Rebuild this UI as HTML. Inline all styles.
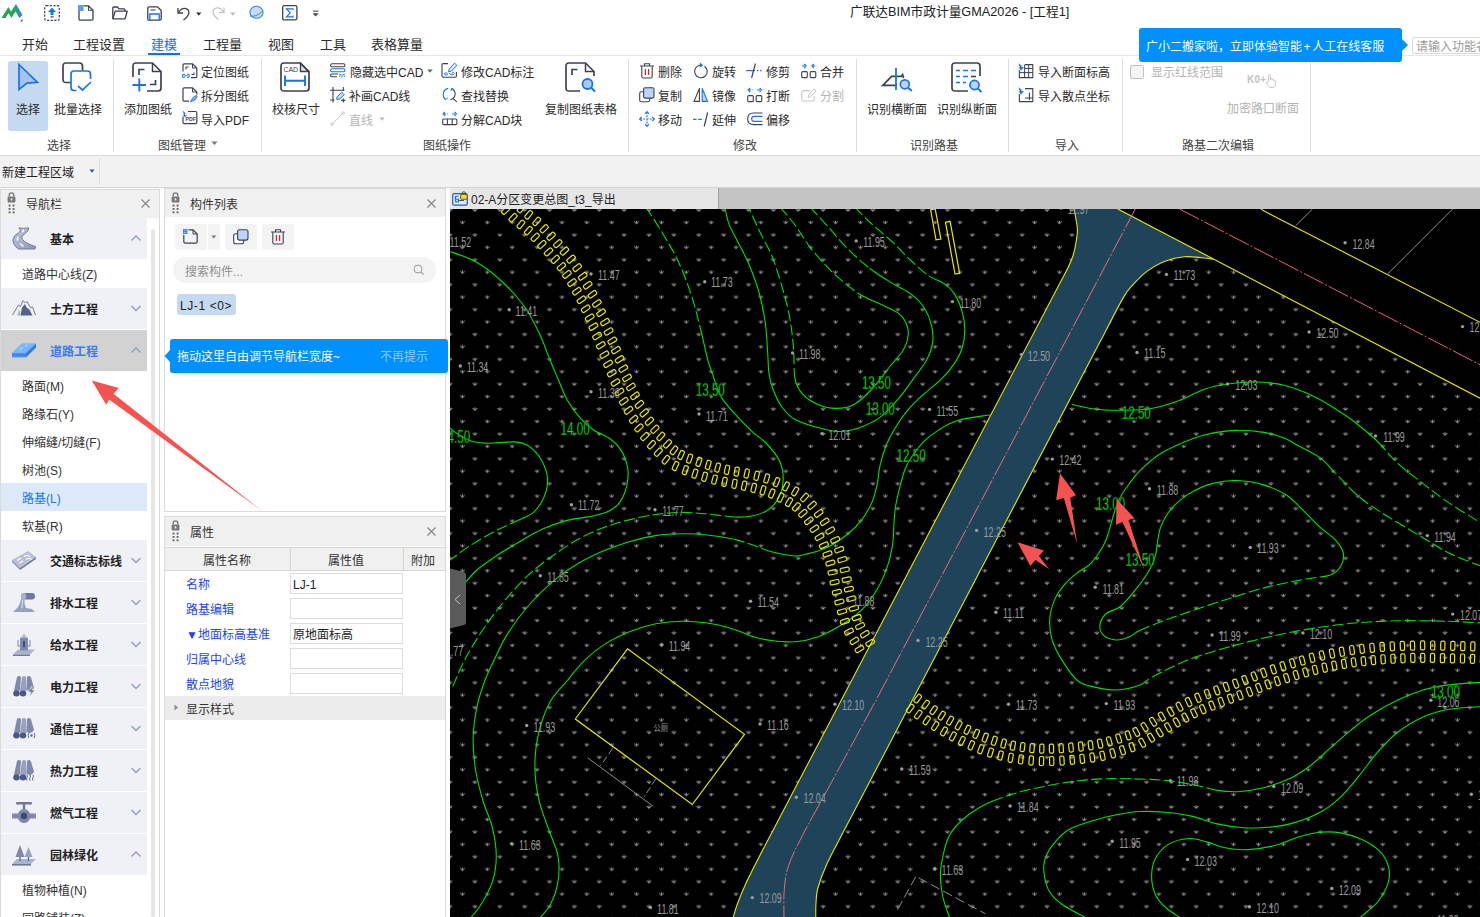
<!DOCTYPE html>
<html lang="zh-CN">
<head>
<meta charset="utf-8">
<title>广联达BIM市政计量GMA2026 - [工程1]</title>
<style>
*{box-sizing:border-box;margin:0;padding:0}
html,body{width:1480px;height:917px;overflow:hidden;background:#fff}
body{font-family:"Liberation Sans","Noto Sans CJK SC",sans-serif;font-size:12px;color:#333;position:relative}
.abs{position:absolute}
.t{position:absolute;white-space:nowrap;line-height:1;margin-top:1px}
.tab,.gl,#title{margin-top:0}
svg{position:absolute;overflow:visible}
#titlebar{left:0;top:0;width:1480px;height:30px;background:#fff}
#title{left:850px;top:6px;font-size:12.7px;color:#222}
.tab{font-size:13px;color:#2b2b2b;top:38px}
.tab.on{color:#1a6fe0}
#ribbon{left:0;top:55px;width:1480px;height:101px;background:#fff;border-top:1px solid #e6e6e6;border-bottom:1px solid #dcdcdc}
.rb{font-size:12px;color:#2b2b2b;margin-top:2px}
.rb.dis{color:#b4b4b4}
.gl{font-size:12px;color:#444;top:140px}
.sep{position:absolute;top:59px;width:1px;height:93px;background:#dcdcdc}
#subbar{left:0;top:156px;width:1480px;height:31px;background:#f2f2f2}
#subline{left:0;top:187px;width:1480px;height:1px;background:#d4d4d4}
</style>
</head>
<body>

<!-- TITLE BAR -->
<div id="titlebar" class="abs"></div>
<div id="title" class="t">广联达BIM市政计量GMA2026 - [工程1]</div>

<!-- logo -->
<svg style="left:1px;top:3px" width="23" height="20" viewBox="0 0 23 20">
<defs><linearGradient id="lg" x1="0" x2="1" y1="0" y2="0"><stop offset="0" stop-color="#1f9c45"/><stop offset=".6" stop-color="#2aa84f"/><stop offset="1" stop-color="#3b7cf0"/></linearGradient></defs>
<path d="M0.5 15 L7.5 4 L10 8.5 L15 1 L21.5 12 L18.5 15 L14.5 8.5 L10.5 15 L7.5 10 L4.5 15 Z" fill="url(#lg)"/>
<path d="M21.5 16 L21.5 18.5 L19 18.5 Z" fill="#444"/>
</svg>
<!-- upload -->
<svg style="left:44px;top:5px" width="16" height="16" viewBox="0 0 16 16" fill="none">
<rect x="0.7" y="0.7" width="14.6" height="14.6" rx="1.5" stroke="#3b4252" stroke-width="1.2" stroke-dasharray="2.2 1.4"/>
<path d="M8 2.5 L12 7 L9.5 7 L9.5 10 L6.5 10 L6.5 7 L4 7 Z" fill="#1a73e8"/><rect x="6.5" y="11.3" width="3" height="1.2" fill="#3b4252"/>
</svg>
<!-- new -->
<svg style="left:78px;top:5px" width="16" height="16" viewBox="0 0 16 16" fill="none">
<path d="M6 0.8 L10.5 0.8 L15 5.2 L15 13.8 Q15 15.2 13.6 15.2 L2.4 15.2 Q1 15.2 1 13.8 L1 6" stroke="#3b4252" stroke-width="1.3"/>
<path d="M10.5 0.8 L10.5 5.2 L15 5.2" stroke="#3b4252" stroke-width="1.1"/>
<path d="M0 1 L5 1 M0 3 L5 3 M0 5 L5 5 M1 0 L1 6 M3 0 L3 6 M5 0 L5 6" stroke="#1a73e8" stroke-width=".9"/>
</svg>
<!-- open -->
<svg style="left:112px;top:6px" width="16" height="14" viewBox="0 0 16 14" fill="none">
<path d="M0.8 12.5 L0.8 2 Q0.8 1 1.8 1 L5.5 1 L7 2.8 L12 2.8 Q13 2.8 13 3.8 L13 5" stroke="#3b4252" stroke-width="1.3"/>
<path d="M0.8 12.8 L3.2 5.2 L15.2 5.2 L13 12.8 Z" stroke="#3b4252" stroke-width="1.3" stroke-linejoin="round"/>
</svg>
<!-- save -->
<svg style="left:147px;top:6px" width="15" height="15" viewBox="0 0 15 15" fill="none">
<path d="M2 0.8 L10.5 0.8 L14.2 4.5 L14.2 12.8 Q14.2 14.2 12.8 14.2 L2.2 14.2 Q0.8 14.2 0.8 12.8 L0.8 2 Q0.8 0.8 2 0.8 Z" stroke="#3b4252" stroke-width="1.3"/>
<path d="M3.5 4 L8.5 4" stroke="#3b4252" stroke-width="1.1"/>
<path d="M2.8 14 L2.8 8 L12.2 8 L12.2 14" stroke="#1a73e8" stroke-width="1.3"/>
</svg>
<!-- undo -->
<svg style="left:177px;top:6px" width="26" height="16" viewBox="0 0 26 16" fill="none">
<path d="M1 2 L1 7 L6 7" stroke="#3b4252" stroke-width="1.3"/>
<path d="M1.3 6.8 Q4.5 1.5 9 2.6 Q13 4 11.5 8.5 Q10.5 11 6.5 14" stroke="#3b4252" stroke-width="1.3"/>
<path d="M19 6.5 L24.4 6.5 L21.7 9.8 Z" fill="#333"/>
</svg>
<!-- redo -->
<svg style="left:212px;top:6px" width="26" height="16" viewBox="0 0 26 16" fill="none">
<path d="M12 1.5 L12 6.5 L7 6.5" stroke="#c4c4c4" stroke-width="1.3"/>
<path d="M11.7 6.3 Q8.5 1 4 2.1 Q0 3.5 1.5 8 Q2.5 10.5 6.5 13.5" stroke="#c4c4c4" stroke-width="1.3"/>
<path d="M18 6.5 L23.4 6.5 L20.7 9.8 Z" fill="#bdbdbd"/>
</svg>
<!-- planet -->
<svg style="left:249px;top:5px" width="15" height="15" viewBox="0 0 15 15" fill="none">
<ellipse cx="7.5" cy="7.3" rx="6.6" ry="6" fill="#c9dcf7" stroke="#3b82f0" stroke-width="1.1"/>
<path d="M1 11 Q7 12.5 13.6 6" stroke="#3b82f0" stroke-width="1"/>
</svg>
<!-- sigma -->
<svg style="left:282px;top:5px" width="16" height="16" viewBox="0 0 16 16" fill="none">
<rect x="0.7" y="0.7" width="14.2" height="14.2" rx="1.5" stroke="#3b4252" stroke-width="1.3"/>
<path d="M11 5 L11 3.8 L4.5 3.8 L8.2 7.8 L4.5 11.8 L11 11.8 L11 10.6" stroke="#1a73e8" stroke-width="1.2"/>
</svg>
<!-- customize -->
<svg style="left:312px;top:10px" width="8" height="8" viewBox="0 0 8 8"><rect x="0.8" y="0.6" width="5.6" height="1" fill="#444"/><path d="M0.6 3.2 L6.6 3.2 L3.6 6.6 Z" fill="#444"/></svg>
<!-- TABS -->
<div class="t tab" style="left:22px">开始</div>
<div class="t tab" style="left:73px">工程设置</div>
<div class="t tab on" style="left:151px">建模</div>
<div class="abs" style="left:148px;top:53px;width:32px;height:2px;background:#1a6fe0"></div>
<div class="t tab" style="left:203px">工程量</div>
<div class="t tab" style="left:268px">视图</div>
<div class="t tab" style="left:320px">工具</div>
<div class="t tab" style="left:371px">表格算量</div>
<!-- RIBBON -->
<div id="ribbon" class="abs"></div>
<div class="abs" style="left:8px;top:61px;width:40px;height:70px;background:#c5d9f1;border-radius:3px"></div>
<!-- select arrow -->
<svg style="left:16px;top:62px" width="24" height="30" viewBox="0 0 24 30"><path d="M3 2.5 L21.5 20.3 L11 21.2 L3 27.5 Z" fill="#a3c4ee" stroke="#1a73e8" stroke-width="1.7" stroke-linejoin="miter"/></svg>
<div class="t rb" style="left:16px;top:102px">选择</div>
<!-- batch select -->
<svg style="left:62px;top:62px" width="30" height="30" viewBox="0 0 30 30" fill="none">
<path d="M8.5 20.5 L4 20.5 Q1 20.5 1 17.5 L1 4 Q1 1 4 1 L17.5 1 Q20.5 1 20.5 4 L20.5 8.5" stroke="#3b4252" stroke-width="1.7"/>
<path d="M14.5 28.5 L12 28.5 Q9 28.5 9 25.5 L9 12 Q9 9 12 9 L25.5 9 Q28.5 9 28.5 12 L28.5 17" stroke="#1a73e8" stroke-width="1.7"/>
<path d="M16 24 L20.5 28 L29 20" stroke="#1a73e8" stroke-width="1.7"/>
</svg>
<div class="t rb" style="left:54px;top:102px">批量选择</div>
<div class="t gl" style="left:47px">选择</div>
<div class="sep" style="left:113px"></div>
<!-- add drawing -->
<svg style="left:132px;top:62px" width="30" height="30" viewBox="0 0 30 30" fill="none">
<path d="M1 15 L1 4 Q1 1 4 1 L20.5 1 L29 9.5 L29 26 Q29 29 26 29 L15 29" stroke="#3b4252" stroke-width="1.7"/>
<path d="M20.5 1.5 L20.5 9.5 L28.5 9.5" stroke="#3b4252" stroke-width="1.5"/>
<path d="M7 13 L7 7.5 L12.5 7.5 M18 22.5 L23.5 22.5 L23.5 18" stroke="#3b4252" stroke-width="1.7"/>
<path d="M7.3 16.5 L7.3 29.5 M0.5 23 L14 23" stroke="#1a73e8" stroke-width="1.9"/>
</svg>
<div class="t rb" style="left:124px;top:102px">添加图纸</div>
<!-- locate drawing -->
<svg style="left:182px;top:63px" width="16" height="16" viewBox="0 0 16 16" fill="none">
<path d="M1 8.5 L1 2 Q1 .8 2.2 .8 L10.5 .8 L14.8 5 L14.8 13.5 Q14.8 14.7 13.6 14.7 L9 14.7" stroke="#3b4252" stroke-width="1.2"/>
<path d="M10.5 1 L10.5 5 L14.5 5" stroke="#3b4252" stroke-width="1"/>
<path d="M4 6.5 L4 4 L6.5 4 M9.5 11.5 L12 11.5 L12 9.5" stroke="#3b4252" stroke-width="1.1"/>
<path d="M3 11.2 L1.6 11.2 Q.6 11.2 .6 12.2 L.6 13.3 Q.6 14.3 1.6 14.3 L3 14.3 M5 11.2 L6.2 11.2 Q7.2 11.2 7.2 12.2 L7.2 13.3 Q7.2 14.3 6.2 14.3 L5 14.3 M2.4 12.75 L5.4 12.75" stroke="#1a73e8" stroke-width="1.1"/>
</svg>
<div class="t rb" style="left:201px;top:65px">定位图纸</div>
<!-- split drawing -->
<svg style="left:182px;top:87px" width="16" height="16" viewBox="0 0 16 16" fill="none">
<path d="M7 14.2 L2.2 14.2 Q1 14.2 1 13 L1 2 Q1 .8 2.2 .8 L10.5 .8 L14.8 5 L14.8 7.5" stroke="#3b4252" stroke-width="1.2"/>
<path d="M10.5 1 L10.5 5 L14.5 5" stroke="#3b4252" stroke-width="1"/>
<path d="M8.5 14.8 L11 10.5 L14.5 8.3 L15.2 9.5 L13 13 Z" fill="#8ab4f8" stroke="#1a73e8" stroke-width=".9"/>
</svg>
<div class="t rb" style="left:201px;top:89px">拆分图纸</div>
<!-- import pdf -->
<svg style="left:182px;top:110px" width="16" height="15" viewBox="0 0 16 15" fill="none">
<path d="M6 1.5 L13.6 1.5 Q14.8 1.5 14.8 2.7 L14.8 12.5 Q14.8 13.7 13.6 13.7 L2.2 13.7 Q1 13.7 1 12.5 L1 6.5" stroke="#3b4252" stroke-width="1.2"/>
<path d="M0.5 0.5 L3.3 3 L3 5.2 L5.2 5 L3 7.2 L0.8 5 L2 4.6 Z" fill="#1a73e8"/>
<text x="3.6" y="10.8" font-family="Liberation Sans,sans-serif" font-size="5.2" font-weight="bold" fill="#3b4252">PDF</text>
</svg>
<div class="t rb" style="left:201px;top:113px">导入PDF</div>
<div class="t gl" style="left:158px">图纸管理</div>
<svg style="left:211px;top:141px" width="8" height="5" viewBox="0 0 8 5"><path d="M.5 .5 L6.5 .5 L3.5 4 Z" fill="#777"/></svg>
<div class="sep" style="left:261px"></div>
<!-- check size -->
<svg style="left:280px;top:62px" width="30" height="30" viewBox="0 0 30 30" fill="none">
<path d="M4 1 L20.5 1 L29 9.5 L29 26 Q29 29 26 29 L4 29 Q1 29 1 26 L1 4 Q1 1 4 1 Z" stroke="#3b4252" stroke-width="1.7"/>
<path d="M20.5 1.5 L20.5 9.5 L28.5 9.5 Z" stroke="#3b4252" stroke-width="1.4" fill="#3b4252" fill-opacity=".15"/>
<text x="3.4" y="9.6" font-family="Liberation Sans,sans-serif" font-size="7" fill="#3b4252">CAD</text>
<path d="M5 13.5 L5 24 M25 13.5 L25 24 M5 18.8 L25 18.8" stroke="#1a73e8" stroke-width="1.9"/>
</svg>
<div class="t rb" style="left:272px;top:102px">校核尺寸</div>
<!-- hide CAD -->
<svg style="left:330px;top:63px" width="16" height="15" viewBox="0 0 16 15" fill="none">
<rect x=".6" y=".8" width="14.4" height="3" rx="1.5" stroke="#3b4252" stroke-width="1.1"/>
<rect x=".6" y="5.8" width="14.4" height="3" rx="1.5" stroke="#1a73e8" stroke-width="1.1"/>
<path d="M8 11 L2 11 Q.6 11 .6 12.4 Q.6 13.8 2 13.8 L7 13.8" stroke="#3b4252" stroke-width="1.1"/>
<path d="M9 11 Q12 13.6 15 11 M10 12.5 L9.3 14 M12 13 L12 14.5 M14 12.5 L14.8 14" stroke="#1a73e8" stroke-width=".9"/>
</svg>
<div class="t rb" style="left:350px;top:65px">隐藏选中CAD</div>
<svg style="left:427px;top:69px" width="7" height="5" viewBox="0 0 7 5"><path d="M.3 .6 L5.7 .6 L3 3.8 Z" fill="#666"/></svg>
<!-- draw CAD line -->
<svg style="left:330px;top:87px" width="16" height="16" viewBox="0 0 16 16" fill="none">
<path d="M3 0 L3 15.5 M0 3.3 L14.5 3.3 M13.3 0 L13.3 4 M0 13 L4.5 13 M13.3 11.5 L13.3 15.5 M11.2 13.4 L15.4 13.4" stroke="#3b4252" stroke-width="1.1"/>
<path d="M6.5 12.3 L7.2 9.8 L11.8 5.2 L14.2 7.6 L9.6 12.2 Z" fill="#c9dcf7" stroke="#1a73e8" stroke-width="1"/>
</svg>
<div class="t rb" style="left:349px;top:89px">补画CAD线</div>
<!-- line -->
<svg style="left:330px;top:111px" width="16" height="16" viewBox="0 0 16 16" fill="none">
<path d="M2.6 12.6 L12.6 2.6" stroke="#c0c0c0" stroke-width="1"/><circle cx="2" cy="13.2" r="1.2" stroke="#c0c0c0" stroke-width=".9" fill="#fff"/><circle cx="13.2" cy="2" r="1.2" stroke="#c0c0c0" stroke-width=".9" fill="#fff"/>
</svg>
<div class="t rb dis" style="left:349px;top:113px">直线</div>
<svg style="left:379px;top:117px" width="7" height="5" viewBox="0 0 7 5"><path d="M.3 .6 L5.7 .6 L3 3.8 Z" fill="#bbb"/></svg>
<!-- modify cad mark -->
<svg style="left:441px;top:62px" width="17" height="16" viewBox="0 0 17 16" fill="none">
<path d="M7 1.6 L2.2 1.6 Q1 1.6 1 2.8 L1 14 Q1 15.2 2.2 15.2 L14.2 15.2 Q15.4 15.2 15.4 14 L15.4 10" stroke="#3b4252" stroke-width="1.1"/>
<path d="M7.5 9.8 L8.3 7 L13.5 1.2 L15.8 3.2 L10.6 9 Z" stroke="#1a73e8" stroke-width="1" fill="#e8f0fe"/>
<path d="M3.5 12.6 Q3.2 10.6 5.2 10.8 Q7 11.4 6.2 12.8 Q5 13.6 3.5 12.6 M8 11 Q9.5 13.5 12.8 12.6 Q14 11.6 12.6 10.6 Q11 10.2 10.6 11.6" stroke="#1a73e8" stroke-width=".9"/>
</svg>
<div class="t rb" style="left:461px;top:65px">修改CAD标注</div>
<!-- find replace -->
<svg style="left:442px;top:87px" width="16" height="16" viewBox="0 0 16 16" fill="none">
<path d="M6.2 1.4 Q1 2.6 1.2 8 Q1.5 11 3.5 12.4" stroke="#1a73e8" stroke-width="1.1"/>
<path d="M1.2 10.2 L3.6 12.6 L5.8 11" stroke="#1a73e8" stroke-width="1"/>
<path d="M9.6 1.8 Q13 3 13.2 7 Q13 10 11 11.6" stroke="#3b4252" stroke-width="1.1" />
<path d="M9 4 L9.4 1.6 L12 2.4" stroke="#1a73e8" stroke-width="1"/>
<path d="M11 11.4 L14.8 14.8 M11 11.4 L8.6 12.8" stroke="#3b4252" stroke-width="1.1"/>
</svg>
<div class="t rb" style="left:461px;top:89px">查找替换</div>
<!-- explode CAD block -->
<svg style="left:442px;top:111px" width="16" height="15" viewBox="0 0 16 15" fill="none">
<rect x=".7" y="8" width="14.2" height="5.6" rx="1" stroke="#3b4252" stroke-width="1.1"/>
<path d="M5.4 8 L5.4 13.6 M10.2 8 L10.2 13.6" stroke="#3b4252" stroke-width="1.1"/>
<path d="M1 3 L5.6 3 M3 1 L1 3 L3 5 M10 3 L14.6 3 M12.6 1 L14.6 3 L12.6 5" stroke="#1a73e8" stroke-width="1.1" stroke-dasharray="3 .8"/>
</svg>
<div class="t rb" style="left:461px;top:113px">分解CAD块</div>
<!-- copy drawing table -->
<svg style="left:565px;top:62px" width="32" height="32" viewBox="0 0 32 32" fill="none">
<path d="M15 29 L4 29 Q1 29 1 26 L1 4 Q1 1 4 1 L20.5 1 L29 9.5 L29 14" stroke="#3b4252" stroke-width="1.7"/>
<path d="M20.5 1.5 L20.5 9.5 L28.5 9.5" stroke="#3b4252" stroke-width="1.5"/>
<path d="M7 13 L7 7.5 L12.5 7.5" stroke="#3b4252" stroke-width="1.7"/>
<circle cx="22.5" cy="22" r="5" fill="#a9c8f5" stroke="#1a73e8" stroke-width="1.8"/>
<path d="M26.3 25.8 L30 29.5" stroke="#1a73e8" stroke-width="2"/>
</svg>
<div class="t rb" style="left:545px;top:102px">复制图纸表格</div>
<div class="t gl" style="left:423px">图纸操作</div>
<div class="sep" style="left:628px"></div>
<!-- MODIFY GROUP -->
<!-- delete -->
<svg style="left:640px;top:63px" width="14" height="16" viewBox="0 0 14 16" fill="none">
<path d="M0 3 L14 3 M4.5 2.8 L4.5 .7 L9.5 .7 L9.5 2.8" stroke="#3b4252" stroke-width="1.1"/>
<path d="M1.8 3.2 L1.8 13.6 Q1.8 15 3.2 15 L10.8 15 Q12.2 15 12.2 13.6 L12.2 3.2" stroke="#3b4252" stroke-width="1.1"/>
<path d="M5.4 6 L5.4 12 M8.6 6 L8.6 12" stroke="#e02020" stroke-width="1.2"/>
</svg>
<div class="t rb" style="left:658px;top:65px">删除</div>
<!-- copy -->
<svg style="left:639px;top:87px" width="16" height="16" viewBox="0 0 16 16" fill="none">
<rect x=".7" y="4.8" width="10" height="10" rx="1.6" stroke="#3b4252" stroke-width="1.1" fill="#fff"/>
<rect x="4.6" y=".7" width="10.4" height="10.4" rx="1.6" stroke="#3b4252" stroke-width="1.1" fill="#bcd4f7"/>
</svg>
<div class="t rb" style="left:658px;top:89px">复制</div>
<!-- move -->
<svg style="left:639px;top:111px" width="16" height="16" viewBox="0 0 16 16" fill="none">
<path d="M8 1 L8 15 M1 8 L15 8" stroke="#1a73e8" stroke-width="1.1" stroke-dasharray="2 1.2"/>
<path d="M6 2.8 L8 .6 L10 2.8 M6 13.2 L8 15.4 L10 13.2 M2.8 6 L.6 8 L2.8 10 M13.2 6 L15.4 8 L13.2 10" stroke="#1a73e8" stroke-width="1.1"/>
</svg>
<div class="t rb" style="left:658px;top:113px">移动</div>
<!-- rotate -->
<svg style="left:693px;top:62px" width="16" height="17" viewBox="0 0 16 17" fill="none">
<path d="M11.4 4.2 A6.3 6.3 0 1 1 7.2 3.2" stroke="#3b4252" stroke-width="1.1"/>
<path d="M6.8 .6 L10.2 3.2 L6.8 5.8 Z" fill="#1a73e8"/>
</svg>
<div class="t rb" style="left:712px;top:65px">旋转</div>
<!-- mirror -->
<svg style="left:693px;top:87px" width="16" height="16" viewBox="0 0 16 16" fill="none">
<path d="M6.4 1.5 L6.4 14.4 L1 14.4 Z" stroke="#3b4252" stroke-width="1.1" stroke-linejoin="round"/>
<path d="M9.2 1.5 L9.2 14.4 L14.6 14.4 Z" stroke="#1a73e8" stroke-width="1.1" fill="#bcd4f7" stroke-linejoin="round"/>
</svg>
<div class="t rb" style="left:712px;top:89px">镜像</div>
<!-- extend -->
<svg style="left:693px;top:111px" width="16" height="16" viewBox="0 0 16 16" fill="none">
<path d="M0 8.4 L10.5 8.4" stroke="#1a73e8" stroke-width="1.2" stroke-dasharray="3.6 1.6"/>
<path d="M14.6 1.5 L11.2 15.5" stroke="#3b4252" stroke-width="1.2"/>
</svg>
<div class="t rb" style="left:712px;top:113px">延伸</div>
<!-- trim -->
<svg style="left:746px;top:63px" width="17" height="16" viewBox="0 0 17 16" fill="none">
<path d="M0 7.6 L9 7.6" stroke="#1a73e8" stroke-width="1.2"/><path d="M11 7.6 L16 7.6" stroke="#1a73e8" stroke-width="1.2" stroke-dasharray="1.5 1.5"/>
<path d="M9.4 .5 L5.6 15" stroke="#3b4252" stroke-width="1.2"/>
</svg>
<div class="t rb" style="left:766px;top:65px">修剪</div>
<!-- break -->
<svg style="left:747px;top:87px" width="16" height="16" viewBox="0 0 16 16" fill="none">
<rect x=".7" y="8.6" width="5.6" height="6" rx="1" stroke="#3b4252" stroke-width="1.1"/><rect x="9.2" y="8.6" width="5.6" height="6" rx="1" stroke="#3b4252" stroke-width="1.1"/>
<path d="M1 3 L5.6 3 M3 1 L1 3 L3 5 M10 3 L14.6 3 M12.6 1 L14.6 3 L12.6 5" stroke="#1a73e8" stroke-width="1.1" stroke-dasharray="3 .8"/>
</svg>
<div class="t rb" style="left:766px;top:89px">打断</div>
<!-- offset -->
<svg style="left:747px;top:112px" width="16" height="14" viewBox="0 0 16 14" fill="none">
<path d="M15.5 1 L6.6 1 Q.7 1 .7 6.8 Q.7 12.6 6.6 12.6 L15.5 12.6" stroke="#3b4252" stroke-width="1.1"/>
<path d="M15.5 4.4 L7.4 4.4 Q4.6 4.4 4.6 6.8 Q4.6 9.4 7.4 9.4 L15.5 9.4" stroke="#1a73e8" stroke-width="1.1"/>
</svg>
<div class="t rb" style="left:766px;top:113px">偏移</div>
<!-- merge -->
<svg style="left:801px;top:63px" width="16" height="16" viewBox="0 0 16 16" fill="none">
<rect x=".7" y="8.6" width="5.6" height="6" rx="1" stroke="#3b4252" stroke-width="1.1"/><rect x="9.2" y="8.6" width="5.6" height="6" rx="1" stroke="#3b4252" stroke-width="1.1"/>
<path d="M1 3 L5 3 M3.2 1 L5.2 3 L3.2 5 M11 3 L15 3 M12.8 1 L10.8 3 L12.8 5" stroke="#1a73e8" stroke-width="1.1" stroke-dasharray="3 .8"/>
</svg>
<div class="t rb" style="left:820px;top:65px">合并</div>
<!-- split (disabled) -->
<svg style="left:801px;top:88px" width="16" height="14" viewBox="0 0 16 14" fill="none">
<path d="M9 2.6 L2 2.6 Q.7 2.6 .7 3.9 L.7 11.7 Q.7 13 2 13 L12 13 Q13.3 13 13.3 11.7 L13.3 8" stroke="#c8c8c8" stroke-width="1.1"/>
<path d="M7 9.4 L8 6.6 L13 1 L15 3 L9.6 8.6 Z" stroke="#c8c8c8" stroke-width="1"/>
</svg>
<div class="t rb dis" style="left:820px;top:89px">分割</div>
<div class="t gl" style="left:733px">修改</div>
<div class="sep" style="left:856px"></div>
<!-- identify cross section -->
<svg style="left:881px;top:66px" width="32" height="26" viewBox="0 0 32 26" fill="none">
<path d="M16 19.4 L1.8 19.4 L10.6 10.4 L20.2 10.4 L21.6 8.6 L22.6 12" stroke="#3b4252" stroke-width="1.7" stroke-linejoin="miter"/>
<path d="M15 2 L15 24" stroke="#1a73e8" stroke-width="1.8"/>
<circle cx="23.8" cy="18.3" r="4.5" fill="#bcd4f7" stroke="#1a73e8" stroke-width="1.7"/>
<path d="M27.2 21.8 L30.8 25" stroke="#1a73e8" stroke-width="1.9"/>
</svg>
<div class="t rb" style="left:867px;top:102px">识别横断面</div>
<!-- identify longitudinal section -->
<svg style="left:951px;top:62px" width="32" height="32" viewBox="0 0 32 32" fill="none">
<path d="M17 29 L4 29 Q1 29 1 26 L1 4 Q1 1 4 1 L26 1 Q29 1 29 4 L29 14" stroke="#3b4252" stroke-width="1.7"/>
<path d="M5 8.5 L9 8.5 M12 8.5 L17 8.5 M20 8.5 L25 8.5 M5 14.5 L9 14.5 M12 14.5 L17 14.5 M5 20.5 L9 20.5 M12 20.5 L15 20.5" stroke="#1a73e8" stroke-width="1.6"/>
<path d="M20 14.5 L25 14.5" stroke="#3b4252" stroke-width="1.6"/>
<circle cx="23.5" cy="23" r="4.6" fill="#bcd4f7" stroke="#1a73e8" stroke-width="1.7"/>
<path d="M26.9 26.5 L30.5 30.1" stroke="#1a73e8" stroke-width="1.9"/>
</svg>
<div class="t rb" style="left:937px;top:102px">识别纵断面</div>
<div class="t gl" style="left:910px">识别路基</div>
<div class="sep" style="left:1008px"></div>
<!-- import section elevation -->
<svg style="left:1018px;top:63px" width="16" height="16" viewBox="0 0 16 16" fill="none">
<path d="M7 1.6 L14.8 1.6 L14.8 14.6 L1.4 14.6 L1.4 7" stroke="#3b4252" stroke-width="1.1"/>
<path d="M6.6 5.4 L14.8 5.4 M6.6 1.6 L6.6 14.6 M1.4 9.6 L14.8 9.6 M10.7 1.6 L10.7 14.6" stroke="#3b4252" stroke-width="1"/>
<path d="M.2 .2 L3.6 2.4 L3.4 4.2 L6 4 L3.2 7.4 L.6 4.6 L2 4.2 Z" fill="#1a73e8"/>
</svg>
<div class="t rb" style="left:1038px;top:65px">导入断面标高</div>
<!-- import scatter -->
<svg style="left:1018px;top:87px" width="16" height="16" viewBox="0 0 16 16" fill="none">
<path d="M7 1.6 L14.8 1.6 L14.8 14.6 L1.4 14.6 L1.4 7" stroke="#3b4252" stroke-width="1.1"/>
<path d="M11.4 5.5 L11.4 13 M7 11 L14.8 11" stroke="#3b4252" stroke-width="1.1"/>
<path d="M.2 .2 L3.6 2.4 L3.4 4.2 L6 4 L3.2 7.4 L.6 4.6 L2 4.2 Z" fill="#1a73e8"/>
</svg>
<div class="t rb" style="left:1038px;top:89px">导入散点坐标</div>
<div class="t gl" style="left:1055px">导入</div>
<div class="sep" style="left:1122px"></div>
<!-- checkbox -->
<div class="abs" style="left:1130px;top:65px;width:14px;height:14px;border:1px solid #c4c4c4;border-radius:2px;background:#f4f4f4"></div>
<div class="t rb dis" style="left:1151px;top:65px">显示红线范围</div>
<div class="t" style="left:1247px;top:74px;font-size:10px;font-weight:bold;color:#c2c2c2;letter-spacing:.2px">K0+</div>
<svg style="left:1265px;top:74px" width="12" height="14" viewBox="0 0 12 14" fill="none">
<path d="M3.4 8 L3.4 1.6 Q3.4 .6 4.3 .6 Q5.2 .6 5.2 1.6 L5.2 5.6 L5.2 4.6 Q6.2 4 7 4.8 L7 6 Q7.8 5 8.8 5.8 L8.8 6.8 Q9.8 6 10.6 7 L10.6 10.4 Q10.4 12.6 9 13.4 L4.6 13.4 Q2.4 11.6 1.2 8.8 Q1.6 7.4 3.4 8.6" stroke="#c2c2c2" stroke-width=".9"/>
</svg>
<div class="t rb dis" style="left:1227px;top:101px">加密路口断面</div>
<div class="t gl" style="left:1182px">路基二次编辑</div>
<div class="sep" style="left:1310px"></div>
<!-- tooltip -->
<div class="abs" style="left:1139px;top:28px;width:263px;height:34px;background:#0090ff;border-radius:3px"></div>
<svg style="left:1402px;top:39px" width="7" height="12" viewBox="0 0 7 12"><path d="M0 0 L6 6 L0 12 Z" fill="#0090ff"/></svg>
<div class="t" style="left:1146px;top:40px;font-size:12px;color:#fff">广小二搬家啦，立即体验智能<span style="margin:0 1.6px">+</span>人工在线客服</div>
<div class="abs" style="left:1412px;top:37px;width:80px;height:17px;border:1px solid #dadada;border-radius:2px;background:#fff"></div>
<div class="t" style="left:1416px;top:40px;font-size:12px;color:#9a9a9a">请输入功能名称</div>
<!-- SUBBAR -->
<div id="subbar" class="abs"></div>
<div id="subline" class="abs"></div>
<div class="t" style="left:2px;top:166px;font-size:12px;color:#222">新建工程区域</div>
<svg style="left:89px;top:169px" width="7" height="5" viewBox="0 0 7 5"><path d="M.4 .6 L5.6 .6 L3 3.8 Z" fill="#2c5c8c"/></svg>
<div class="abs" style="left:99px;top:158px;width:1px;height:27px;background:#dedede"></div>
<!-- NAV PANEL -->
<div class="abs" style="left:0;top:188px;width:450px;height:729px;background:#fff"></div>
<div class="abs" style="left:0;top:189px;width:160px;height:729px;background:#fff;border:1px solid #dadada"></div>
<div class="abs" style="left:1px;top:190px;width:158px;height:28px;background:#f0f0f0"></div>
<svg style="left:7px;top:192px" width="9" height="23" viewBox="0 0 9 23" fill="none"><path d="M2.2 4.5 L2.2 3 Q2.2 .8 4.5 .8 Q6.8 .8 6.8 3 L6.8 4.5" stroke="#777" stroke-width="1.3"/><rect x=".6" y="4.4" width="7.8" height="6" rx="1" fill="#777"/><rect x="3.7" y="6.3" width="1.6" height="2.2" fill="#eee"/><g fill="#666"><rect x="1.6" y="12.6" width="1.9" height="1.9"/><rect x="5.6" y="12.6" width="1.9" height="1.9"/><rect x="1.6" y="16" width="1.9" height="1.9"/><rect x="5.6" y="16" width="1.9" height="1.9"/><rect x="1.6" y="19.4" width="1.9" height="1.9"/><rect x="5.6" y="19.4" width="1.9" height="1.9"/></g></svg>
<div class="t" style="left:26px;top:198px;font-size:12px;color:#333">导航栏</div>
<svg style="left:141px;top:199px" width="9" height="9" viewBox="0 0 9 9"><path d="M.5 .5 L8.5 8.5 M8.5 .5 L.5 8.5" stroke="#888" stroke-width="1.2"/></svg>
<div class="abs" style="left:151px;top:229px;width:4px;height:688px;background:#e6e6e6;border-radius:2px"></div>
<div class="abs" style="left:1px;top:218px;width:146px;height:41px;background:#f0f1f6"></div>
<svg style="left:12px;top:227px" width="24" height="24" viewBox="0 0 24 24"><defs><linearGradient id="rdg" x1="0" y1="0" x2="1" y2="1"><stop offset="0" stop-color="#c3cadd"/><stop offset="1" stop-color="#8d98b8"/></linearGradient></defs><path d="M7 .8 Q12 2.2 16.5 .8 Q17.5 3.5 13 6.5 Q8.5 9.5 10.5 12.5 Q13.5 16.5 23.5 19.5 L23 22 L6.5 22 Q.5 17.5 1 12.5 Q1.5 8.5 7 5.5 Q10 3.5 7 .8 Z" fill="url(#rdg)" stroke="#707b9c" stroke-width="1"/><path d="M11.5 3 L10.8 4.6 M5.8 10.6 L5.4 13 M8.5 17 L11 19" stroke="#fff" stroke-width="1.5" stroke-linecap="round"/></svg>
<div class="t" style="left:50px;top:233px;font-size:12px;font-weight:bold;color:#222">基本</div>
<svg style="left:131px;top:235px" width="10" height="7" viewBox="0 0 10 7" fill="none"><path d="M.5 5.5 L5 1 L9.5 5.5" stroke="#8d9bc5" stroke-width="1.3"/></svg>
<div class="t" style="left:22px;top:268px;font-size:12px;color:#333">道路中心线(Z)</div>
<div class="abs" style="left:1px;top:288px;width:146px;height:41px;background:#f0f1f6"></div>
<svg style="left:12px;top:297px" width="24" height="24" viewBox="0 0 24 24"><path d="M.5 18 L6.5 8 L8.5 9.5 L11 3.5 L13.5 6 L15 4.5 L18.5 10.5 L20.5 10 L23.5 18" stroke="#6f7a99" stroke-width="1" fill="none" stroke-linejoin="round"/><path d="M8.5 18.5 L10 10.5 L13 7 L14.5 10.5 L17.5 12.5 L20.5 18.5 Z" fill="#55628c"/><path d="M5 18.5 L7.5 12 L8.8 18.5 Z" fill="#aab3cc"/></svg>
<div class="t" style="left:50px;top:303px;font-size:12px;font-weight:bold;color:#222">土方工程</div>
<svg style="left:131px;top:305px" width="10" height="7" viewBox="0 0 10 7" fill="none"><path d="M.5 1 L5 5.5 L9.5 1" stroke="#8d9bc5" stroke-width="1.3"/></svg>
<div class="abs" style="left:1px;top:330px;width:146px;height:41px;background:#d2d2d2"></div>
<svg style="left:12px;top:339px" width="24" height="24" viewBox="0 0 24 24"><path d="M0 13.8 L10 4.2 L24 4.2 L14 13.8 Z" fill="#7ab5f8"/><path d="M0 13.8 L14 13.8 L14 18.4 L0 18.4 Z" fill="#4a93f5"/><path d="M14 13.8 L24 4.2 L24 8.8 L14 18.4 Z" fill="#3a7fe6"/><path d="M0 16 L14 16 L24 6.4" stroke="#2f6fd8" stroke-width=".7" fill="none"/><path d="M7.5 11 L10.5 8.6 M13 7.4 L15.5 5.6" stroke="#d6e8ff" stroke-width="1"/></svg>
<div class="t" style="left:50px;top:345px;font-size:12px;font-weight:bold;color:#3b7de8">道路工程</div>
<svg style="left:131px;top:347px" width="10" height="7" viewBox="0 0 10 7" fill="none"><path d="M.5 5.5 L5 1 L9.5 5.5" stroke="#8d9bc5" stroke-width="1.3"/></svg>
<div class="t" style="left:22px;top:380px;font-size:12px;color:#333">路面(M)</div>
<div class="t" style="left:22px;top:408px;font-size:12px;color:#333">路缘石(Y)</div>
<div class="t" style="left:22px;top:436px;font-size:12px;color:#333">伸缩缝/切缝(F)</div>
<div class="t" style="left:22px;top:464px;font-size:12px;color:#333">树池(S)</div>
<div class="abs" style="left:1px;top:483px;width:146px;height:28px;background:#dce9f9"></div>
<div class="t" style="left:22px;top:492px;font-size:12px;color:#1878f2">路基(L)</div>
<div class="t" style="left:22px;top:520px;font-size:12px;color:#333">软基(R)</div>
<div class="abs" style="left:1px;top:540px;width:146px;height:41px;background:#f0f1f6"></div>
<svg style="left:12px;top:549px" width="24" height="24" viewBox="0 0 24 24"><path d="M0 11 L16 2 L24 8 L8 19 Z" fill="#b8c0d6"/><path d="M0 11 L8 19 L8 21 L0 13 Z" fill="#8893b4"/><path d="M8 19 L24 8 L24 10 L8 21 Z" fill="#6f7a99"/><path d="M5 11.5 L9 9 M7.5 14 L11 11.8 M12 7.5 Q15 5.5 18 7.5 M14 10.5 Q17 8.5 20 10.5" stroke="#fff" stroke-width="1.1" fill="none"/></svg>
<div class="t" style="left:50px;top:555px;font-size:12px;font-weight:bold;color:#222">交通标志标线</div>
<svg style="left:131px;top:557px" width="10" height="7" viewBox="0 0 10 7" fill="none"><path d="M.5 1 L5 5.5 L9.5 1" stroke="#8d9bc5" stroke-width="1.3"/></svg>
<div class="abs" style="left:1px;top:582px;width:146px;height:41px;background:#f0f1f6"></div>
<svg style="left:12px;top:591px" width="24" height="24" viewBox="0 0 24 24"><rect x="9" y="2" width="14" height="6.5" rx="3.2" fill="#6f7a99"/><ellipse cx="11.5" cy="5.2" rx="2.6" ry="3.2" fill="#aab3cc"/><path d="M9 8 Q8 15 3 19 L1 21 L23 21 L20 18 L14 17 Q12 13 12.5 8.5 Z" fill="#98a2c0"/><path d="M10.5 9 L10 17" stroke="#dfe3ef" stroke-width="1"/></svg>
<div class="t" style="left:50px;top:597px;font-size:12px;font-weight:bold;color:#222">排水工程</div>
<svg style="left:131px;top:599px" width="10" height="7" viewBox="0 0 10 7" fill="none"><path d="M.5 1 L5 5.5 L9.5 1" stroke="#8d9bc5" stroke-width="1.3"/></svg>
<div class="abs" style="left:1px;top:624px;width:146px;height:41px;background:#f0f1f6"></div>
<svg style="left:12px;top:633px" width="24" height="24" viewBox="0 0 24 24"><path d="M1 21.5 L6 16.5 L23 16.5 L18 21.5 Z" fill="#aab3cc"/><path d="M1 21.5 L18 21.5 L18 23 L1 23 Z" fill="#6f7a99"/><rect x="8" y="4.5" width="8" height="13" rx="1" fill="#7e89ab"/><path d="M9.5 4.5 L12 .5 L14.5 4.5 Z" fill="#aab3cc"/><rect x="11" y="8" width="2" height="6" fill="#3f4a6e"/><path d="M6 7 L6 13 L8 13 M18 7 L18 13 L16 13" stroke="#98a2c0" stroke-width="1.4" fill="none"/></svg>
<div class="t" style="left:50px;top:639px;font-size:12px;font-weight:bold;color:#222">给水工程</div>
<svg style="left:131px;top:641px" width="10" height="7" viewBox="0 0 10 7" fill="none"><path d="M.5 1 L5 5.5 L9.5 1" stroke="#8d9bc5" stroke-width="1.3"/></svg>
<div class="abs" style="left:1px;top:666px;width:146px;height:41px;background:#f0f1f6"></div>
<svg style="left:12px;top:675px" width="24" height="24" viewBox="0 0 24 24"><path d="M5 2 Q7 0 9 2 L8 15 Q4 20 2 16 Z" fill="#7e89ab"/><path d="M10 2 Q12 0 14 2 L15 15 Q11 20 8 16 Z" fill="#98a2c0"/><path d="M15 2 Q17 0 19 2.5 L22 13 Q19 18 15 15 Z" fill="#7e89ab"/><ellipse cx="4.5" cy="18.5" rx="3.3" ry="3" fill="#4d5880"/><ellipse cx="11" cy="18.5" rx="3.3" ry="3" fill="#4d5880"/><path d="M20 11 L16 17 L19 17 L17 22 L23 15 L20 15 Z" fill="#6f7a99" stroke="#f0f1f6" stroke-width=".6"/></svg>
<div class="t" style="left:50px;top:681px;font-size:12px;font-weight:bold;color:#222">电力工程</div>
<svg style="left:131px;top:683px" width="10" height="7" viewBox="0 0 10 7" fill="none"><path d="M.5 1 L5 5.5 L9.5 1" stroke="#8d9bc5" stroke-width="1.3"/></svg>
<div class="abs" style="left:1px;top:708px;width:146px;height:41px;background:#f0f1f6"></div>
<svg style="left:12px;top:717px" width="24" height="24" viewBox="0 0 24 24"><path d="M5 2 Q7 0 9 2 L8 15 Q4 20 2 16 Z" fill="#7e89ab"/><path d="M10 2 Q12 0 14 2 L15 15 Q11 20 8 16 Z" fill="#98a2c0"/><path d="M15 2 Q17 0 19 2.5 L22 13 Q19 18 15 15 Z" fill="#7e89ab"/><ellipse cx="4.5" cy="18.5" rx="3.3" ry="3" fill="#4d5880"/><ellipse cx="11" cy="18.5" rx="3.3" ry="3" fill="#4d5880"/><circle cx="19.5" cy="18.5" r="1.2" fill="#5a6690"/><path d="M16.8 16 Q15.4 18.5 16.8 21 M22.2 16 Q23.6 18.5 22.2 21" stroke="#5a6690" stroke-width="1" fill="none"/></svg>
<div class="t" style="left:50px;top:723px;font-size:12px;font-weight:bold;color:#222">通信工程</div>
<svg style="left:131px;top:725px" width="10" height="7" viewBox="0 0 10 7" fill="none"><path d="M.5 1 L5 5.5 L9.5 1" stroke="#8d9bc5" stroke-width="1.3"/></svg>
<div class="abs" style="left:1px;top:750px;width:146px;height:41px;background:#f0f1f6"></div>
<svg style="left:12px;top:759px" width="24" height="24" viewBox="0 0 24 24"><path d="M5 2 Q7 0 9 2 L8 15 Q4 20 2 16 Z" fill="#7e89ab"/><path d="M10 2 Q12 0 14 2 L15 15 Q11 20 8 16 Z" fill="#98a2c0"/><path d="M15 2 Q17 0 19 2.5 L22 13 Q19 18 15 15 Z" fill="#7e89ab"/><ellipse cx="4.5" cy="18.5" rx="3.3" ry="3" fill="#4d5880"/><ellipse cx="11" cy="18.5" rx="3.3" ry="3" fill="#4d5880"/><path d="M15 16 Q16 17 15 18.5 Q14 20 15 21.5 M18 16 Q19 17 18 18.5 Q17 20 18 21.5 M21 16 Q22 17 21 18.5 Q20 20 21 21.5" stroke="#5a6690" stroke-width="1" fill="none"/></svg>
<div class="t" style="left:50px;top:765px;font-size:12px;font-weight:bold;color:#222">热力工程</div>
<svg style="left:131px;top:767px" width="10" height="7" viewBox="0 0 10 7" fill="none"><path d="M.5 1 L5 5.5 L9.5 1" stroke="#8d9bc5" stroke-width="1.3"/></svg>
<div class="abs" style="left:1px;top:792px;width:146px;height:41px;background:#f0f1f6"></div>
<svg style="left:12px;top:801px" width="24" height="24" viewBox="0 0 24 24"><rect x="4" y="1" width="16" height="2.4" rx="1" fill="#6f7a99"/><rect x="10.8" y="3" width="2.4" height="5" fill="#6f7a99"/><path d="M0 12.5 L6 12.5 Q8 8 12 8 Q16 8 18 12.5 L24 12.5 L24 17.5 L18 17.5 Q16 22 12 22 Q8 22 6 17.5 L0 17.5 Z" fill="#7e89ab"/><circle cx="12" cy="15" r="3.2" fill="#3f4a6e"/></svg>
<div class="t" style="left:50px;top:807px;font-size:12px;font-weight:bold;color:#222">燃气工程</div>
<svg style="left:131px;top:809px" width="10" height="7" viewBox="0 0 10 7" fill="none"><path d="M.5 1 L5 5.5 L9.5 1" stroke="#8d9bc5" stroke-width="1.3"/></svg>
<div class="abs" style="left:1px;top:834px;width:146px;height:41px;background:#f0f1f6"></div>
<svg style="left:12px;top:843px" width="24" height="24" viewBox="0 0 24 24"><path d="M0 21 L5 16 L24 16 L19 21 Z" fill="#aab3cc"/><path d="M0 21 L19 21 L19 22.6 L0 22.6 Z" fill="#6f7a99"/><path d="M8 2 L12.5 14 L3.5 14 Z" fill="#7e89ab"/><path d="M16.5 4 L20.5 14 L12.5 14 Z" fill="#98a2c0"/><path d="M8 14 L8 18 M16.5 14 L16.5 18" stroke="#5a6690" stroke-width="1.3"/></svg>
<div class="t" style="left:50px;top:849px;font-size:12px;font-weight:bold;color:#222">园林绿化</div>
<svg style="left:131px;top:851px" width="10" height="7" viewBox="0 0 10 7" fill="none"><path d="M.5 5.5 L5 1 L9.5 5.5" stroke="#8d9bc5" stroke-width="1.3"/></svg>
<div class="t" style="left:22px;top:884px;font-size:12px;color:#333">植物种植(N)</div>
<div class="t" style="left:22px;top:912px;font-size:12px;color:#333">园路铺装(Z)</div>
<!-- COMPONENT LIST PANEL -->
<div class="abs" style="left:164px;top:188px;width:282px;height:324px;background:#fff;border:1px solid #dadada"></div>
<div class="abs" style="left:165px;top:189px;width:280px;height:28px;background:#f0f0f0"></div>
<svg style="left:171px;top:192px" width="9" height="23" viewBox="0 0 9 23" fill="none"><path d="M2.2 4.5 L2.2 3 Q2.2 .8 4.5 .8 Q6.8 .8 6.8 3 L6.8 4.5" stroke="#777" stroke-width="1.3"/><rect x=".6" y="4.4" width="7.8" height="6" rx="1" fill="#777"/><rect x="3.7" y="6.3" width="1.6" height="2.2" fill="#eee"/><g fill="#666"><rect x="1.6" y="12.6" width="1.9" height="1.9"/><rect x="5.6" y="12.6" width="1.9" height="1.9"/><rect x="1.6" y="16" width="1.9" height="1.9"/><rect x="5.6" y="16" width="1.9" height="1.9"/><rect x="1.6" y="19.4" width="1.9" height="1.9"/><rect x="5.6" y="19.4" width="1.9" height="1.9"/></g></svg>
<div class="t" style="left:190px;top:198px;font-size:12px;color:#333">构件列表</div>
<svg style="left:427px;top:199px" width="9" height="9" viewBox="0 0 9 9"><path d="M.5 .5 L8.5 8.5 M8.5 .5 L.5 8.5" stroke="#888" stroke-width="1.2"/></svg>
<div class="abs" style="left:175px;top:224px;width:32px;height:26px;background:#f3f3f3;border-radius:3px 0 0 3px"></div>
<div class="abs" style="left:208px;top:224px;width:12px;height:26px;background:#f3f3f3;border-radius:0 3px 3px 0"></div>
<div class="abs" style="left:225px;top:224px;width:32px;height:26px;background:#f3f3f3;border-radius:3px"></div>
<div class="abs" style="left:262px;top:224px;width:32px;height:26px;background:#f3f3f3;border-radius:3px"></div>
<svg style="left:183px;top:229px" width="15" height="15" viewBox="0 0 15 15" fill="none">
<path d="M5.5 .8 L10 .8 L14.2 5 L14.2 12.8 Q14.2 14.2 12.8 14.2 L2.2 14.2 Q.8 14.2 .8 12.8 L.8 6" stroke="#3b4252" stroke-width="1.2"/>
<path d="M10 .8 L10 5 L14.2 5" stroke="#3b4252" stroke-width="1"/>
<path d="M0 .8 L4.4 .8 M0 2.6 L4.4 2.6 M0 4.4 L4.4 4.4 M.6 0 L.6 5 M2.2 0 L2.2 5 M3.8 0 L3.8 5" stroke="#1a73e8" stroke-width=".8"/></svg>
<svg style="left:211px;top:235px" width="6" height="4" viewBox="0 0 6 4"><path d="M.3 .4 L5.3 .4 L2.8 3.4 Z" fill="#777"/></svg>
<svg style="left:233px;top:229px" width="16" height="16" viewBox="0 0 16 16" fill="none">
<rect x=".7" y="4.8" width="10" height="10" rx="2" stroke="#3b4252" stroke-width="1.1" fill="#fff"/>
<rect x="4.6" y=".7" width="10.4" height="10.4" rx="2" stroke="#3b4252" stroke-width="1.1" fill="#bcd4f7"/></svg>
<svg style="left:271px;top:229px" width="14" height="16" viewBox="0 0 14 16" fill="none">
<path d="M0 3 L14 3 M4.5 2.8 L4.5 .7 L9.5 .7 L9.5 2.8" stroke="#3b4252" stroke-width="1.1"/>
<path d="M1.8 3.2 L1.8 13.6 Q1.8 15 3.2 15 L10.8 15 Q12.2 15 12.2 13.6 L12.2 3.2" stroke="#3b4252" stroke-width="1.1"/>
<path d="M5.4 6 L5.4 12 M8.6 6 L8.6 12" stroke="#e02020" stroke-width="1.2"/></svg>
<div class="abs" style="left:173px;top:257px;width:263px;height:26px;background:#f3f3f3;border-radius:13px"></div>
<div class="t" style="left:185px;top:265px;font-size:12px;color:#8f8f8f">搜索构件...</div>
<svg style="left:413px;top:264px" width="12" height="12" viewBox="0 0 12 12" fill="none"><circle cx="5" cy="5" r="4" stroke="#9a9a9a" stroke-width="1"/><path d="M8 8 L10.6 10.6" stroke="#9a9a9a" stroke-width="1.1"/></svg>
<div class="abs" style="left:177px;top:294px;width:59px;height:21px;background:#c5d9f1;border-radius:3px"></div>
<div class="t" style="left:180px;top:299px;font-size:12px;color:#222;letter-spacing:.6px">LJ-1 &lt;0&gt;</div>
<!-- PROPERTIES PANEL -->
<div class="abs" style="left:164px;top:516px;width:282px;height:405px;background:#fff;border:1px solid #dadada"></div>
<div class="abs" style="left:165px;top:517px;width:280px;height:29px;background:#f0f0f0"></div>
<svg style="left:171px;top:520px" width="9" height="23" viewBox="0 0 9 23" fill="none"><path d="M2.2 4.5 L2.2 3 Q2.2 .8 4.5 .8 Q6.8 .8 6.8 3 L6.8 4.5" stroke="#777" stroke-width="1.3"/><rect x=".6" y="4.4" width="7.8" height="6" rx="1" fill="#777"/><rect x="3.7" y="6.3" width="1.6" height="2.2" fill="#eee"/><g fill="#666"><rect x="1.6" y="12.6" width="1.9" height="1.9"/><rect x="5.6" y="12.6" width="1.9" height="1.9"/><rect x="1.6" y="16" width="1.9" height="1.9"/><rect x="5.6" y="16" width="1.9" height="1.9"/><rect x="1.6" y="19.4" width="1.9" height="1.9"/><rect x="5.6" y="19.4" width="1.9" height="1.9"/></g></svg>
<div class="t" style="left:190px;top:526px;font-size:12px;color:#333">属性</div>
<svg style="left:427px;top:527px" width="9" height="9" viewBox="0 0 9 9"><path d="M.5 .5 L8.5 8.5 M8.5 .5 L.5 8.5" stroke="#888" stroke-width="1.2"/></svg>
<div class="abs" style="left:165px;top:547px;width:280px;height:24px;background:#f0f0f0;border-top:1px solid #d4d4d4;border-bottom:1px solid #d4d4d4"></div>
<div class="abs" style="left:290px;top:547px;width:1px;height:24px;background:#d4d4d4"></div>
<div class="abs" style="left:403px;top:547px;width:1px;height:24px;background:#d4d4d4"></div>
<div class="t" style="left:203px;top:554px;font-size:12px;color:#333">属性名称</div>
<div class="t" style="left:328px;top:554px;font-size:12px;color:#333">属性值</div>
<div class="t" style="left:411px;top:554px;font-size:12px;color:#333">附加</div>
<div class="t" style="left:186px;top:578px;font-size:12px;color:#2446ee">名称</div>
<div class="abs" style="left:290px;top:573px;width:113px;height:21px;background:#fff;border:1px solid #dcdcdc"></div>
<div class="t" style="left:293px;top:578px;font-size:12px;color:#222">LJ-1</div>
<div class="t" style="left:186px;top:603px;font-size:12px;color:#2446ee">路基编辑</div>
<div class="abs" style="left:290px;top:598px;width:113px;height:21px;background:#fff;border:1px solid #dcdcdc"></div>
<div class="t" style="left:186px;top:628px;font-size:12px;color:#2446ee">▼地面标高基准</div>
<div class="abs" style="left:290px;top:623px;width:113px;height:21px;background:#fff;border:1px solid #dcdcdc"></div>
<div class="t" style="left:293px;top:628px;font-size:12px;color:#222">原地面标高</div>
<div class="t" style="left:186px;top:653px;font-size:12px;color:#2446ee">归属中心线</div>
<div class="abs" style="left:290px;top:648px;width:113px;height:21px;background:#fff;border:1px solid #dcdcdc"></div>
<div class="t" style="left:186px;top:678px;font-size:12px;color:#2446ee">散点地貌</div>
<div class="abs" style="left:290px;top:673px;width:113px;height:21px;background:#fff;border:1px solid #dcdcdc"></div>
<div class="abs" style="left:165px;top:696px;width:280px;height:24px;background:#ececec"></div>
<svg style="left:174px;top:704px" width="5" height="7" viewBox="0 0 5 7"><path d="M.5 .5 L4 3.5 L.5 6.5 Z" fill="#888"/></svg>
<div class="t" style="left:186px;top:703px;font-size:12px;color:#333">显示样式</div>
<!-- CAD CANVAS -->
<div class="abs" style="left:450px;top:188px;width:1030px;height:21px;background:#c4c4c4"></div>
<div class="abs" style="left:450px;top:188px;width:269px;height:21px;background:#e6e6e6;border-right:1px solid #a0a0a0"></div>
<svg style="left:452px;top:191px" width="16" height="15" viewBox="0 0 16 15" fill="none"><rect x=".7" y="2.6" width="14.6" height="11.6" rx="1.6" fill="#dce9fb" stroke="#2a5fb0" stroke-width="1.2"/><path d="M3.4 5.2 L6.6 5.2 M3.4 5.2 L3.4 8" stroke="#2a5fb0" stroke-width="1.1"/><rect x="3.6" y="8.2" width="3" height="2.6" stroke="#2a5fb0" stroke-width="1"/><path d="M6.6 9.5 L12 9.5" stroke="#2a5fb0" stroke-width="1"/><path d="M10 3.6 L10 2.6 Q10 .8 11.8 .8 Q13.6 .8 13.6 2.6 L13.6 3.6" stroke="#5a4a00" stroke-width="1"/><rect x="8.6" y="3.4" width="6.6" height="4.8" rx=".6" fill="#ffd936" stroke="#5a4a00" stroke-width=".9"/></svg>
<div class="t" style="left:471px;top:193px;font-size:12px;color:#222">02-A分区变更总图_t3_导出</div>
<svg id="cad" style="left:450px;top:209px;overflow:hidden" width="1030" height="708" viewBox="450 209 1030 708">
<defs><pattern id="grass" x="450" y="210" width="24.875" height="24.875" patternUnits="userSpaceOnUse"><path id="gm" d="M-2.3 -1 L0 1.3 L2.3 -1 M0 -1.7 L0 1.3" stroke="#909090" stroke-width="1" fill="none"/><use href="#gm" x="24.875"/><use href="#gm" y="24.875"/><use href="#gm" x="24.875" y="24.875"/><use href="#gm" x="12.44" y="12.44"/></pattern></defs>
<rect x="450" y="209" width="1030" height="708" fill="#000"/>
<rect x="450" y="209" width="1030" height="708" fill="url(#grass)"/>
<path d="M1117.7 209 L1480 398.2 L1480 209 Z" fill="#000"/>
<path d="M1073.8 208C1074.4 211.3 1076.9 222.5 1077.3 227.8C1077.7 233.2 1077.1 235.4 1076.4 240.1C1075.7 244.8 1074.5 251 1072.9 256C1071.3 261 1069.6 264.3 1066.8 270C1064 275.7 1058 286.7 1056.3 290L812.8 754.5C809.3 761.2 799.6 779.6 791.8 794.5C784 809.4 772 832.3 766 843.7C760 855.1 759.5 856.2 756 863C752.5 869.8 748.5 877.7 745.3 884.7C742.1 891.7 739 899.5 737 905C735 910.5 733.7 915.8 733 918L815.8 918C815.8 915.5 815.6 908.1 816 903C816.4 897.9 816.1 894.1 818 887.5C819.9 880.9 823 872.4 827.2 863.2C831.4 854 836.9 844.3 843 832.5C849.1 820.7 860.5 799.2 864 792.5L1102 338.1C1105.5 331.4 1117.8 307.1 1123 298.1C1128.2 289.1 1129.4 288.6 1133.5 284.1C1137.6 279.6 1142.3 274.7 1147.6 270.9C1152.9 267.1 1158.9 263.5 1165.1 261.2C1171.2 258.9 1178.3 257.4 1184.5 256.8C1190.7 256.2 1197.2 257.3 1202 257.7C1206.8 258.1 1211.6 258.9 1213.5 259.2L1117.7 208 Z" fill="#1f4459"/>
<g fill="none" stroke="#e6e600" stroke-width="1.1">
<path d="M1073.8 208C1074.4 211.3 1076.9 222.5 1077.3 227.8C1077.7 233.2 1077.1 235.4 1076.4 240.1C1075.7 244.8 1074.5 251 1072.9 256C1071.3 261 1069.6 264.3 1066.8 270C1064 275.7 1058 286.7 1056.3 290L812.8 754.5C809.3 761.2 799.6 779.6 791.8 794.5C784 809.4 772 832.3 766 843.7C760 855.1 759.5 856.2 756 863C752.5 869.8 748.5 877.7 745.3 884.7C742.1 891.7 739 899.5 737 905C735 910.5 733.7 915.8 733 918"/>
<path d="M815.8 918C815.8 915.5 815.6 908.1 816 903C816.4 897.9 816.1 894.1 818 887.5C819.9 880.9 823 872.4 827.2 863.2C831.4 854 836.9 844.3 843 832.5C849.1 820.7 860.5 799.2 864 792.5L1102 338.1C1105.5 331.4 1117.8 307.1 1123 298.1C1128.2 289.1 1129.4 288.6 1133.5 284.1C1137.6 279.6 1142.3 274.7 1147.6 270.9C1152.9 267.1 1158.9 263.5 1165.1 261.2C1171.2 258.9 1178.3 257.4 1184.5 256.8C1190.7 256.2 1197.2 257.3 1202 257.7C1206.8 258.1 1211.6 258.9 1213.5 259.2"/>
<path d="M1117.7 209 L1480 398.2"/>
<path d="M1261 209 Q1263 210.5 1266 212 L1480 322.3"/>
</g>
<path d="M1135.8 208L876.1 700C868.6 713.8 843.4 760.3 831.2 782.8C819 805.3 809.9 821 802.8 834.8C795.7 848.6 791.7 856.5 788.6 865.6C785.5 874.7 785.1 880.6 784.3 889.3C783.5 898 784 913.2 784 918" fill="none" stroke="#e8707a" stroke-width="1" stroke-dasharray="22 2 2 2"/>
<path d="M1179.5 209 L1480 364.7" fill="none" stroke="#e8606a" stroke-width="1" stroke-dasharray="22 2 2 2"/>
<path d="M1312.5 209 L1295.7 225.7 M1452.7 209 L1387.1 274.6" stroke="#8c8c8c" stroke-width="1" fill="none"/>
<g fill="none" stroke="#00e000" stroke-width="1.1">
<path d="M448 250.8C452.6 252.6 466.8 256.7 475.7 261.7C484.6 266.7 493.4 273.5 501.5 281C509.6 288.5 518.2 297.8 524.6 306.8C531 315.8 535.7 326 540 335C544.3 344 547.3 353.5 550.3 360.8C553.3 368.1 555.2 372.3 558 378.8C560.8 385.3 563.4 393.3 567.2 400C571.1 406.7 576.8 414.2 581.1 419.2C585.5 424.1 588.3 426.3 593.3 429.7C598.2 433.1 606.1 435.8 610.8 439.3C615.5 442.8 618.5 446.1 621.3 450.6C624.1 455.1 626.3 461.7 627.4 466.3C628.5 470.9 628.3 474.1 627.9 478.5C627.5 482.9 626.5 488.1 624.8 492.5C623.1 496.9 621 501.3 617.8 504.7C614.6 508.1 610.5 510.6 605.6 512.6C600.7 514.6 594.5 515.6 588.1 516.9C581.7 518.2 574.8 518.4 567.2 520.4C559.6 522.4 550.6 525.6 542.7 529.1C534.8 532.6 526.7 537.6 520 541.4C513.3 545.2 507.5 548.7 502.6 551.8C497.7 554.9 494.9 556.8 490.4 560C485.9 563.2 480.6 566.3 475.7 571C470.8 575.7 465.6 582.5 461 588C456.4 593.5 450.2 601.3 448 604"/>
<path d="M448 426.5C449.8 427.9 455.1 432.5 459 434.9C462.9 437.3 466.8 439.6 471.2 441C475.6 442.4 480.7 442.8 485.1 443.1C489.5 443.4 492.4 443 497.4 442.8C502.3 442.6 509.9 441.5 514.8 441.9C519.7 442.3 523.2 443 527 445C530.8 447 534.6 450.6 537.5 454.1C540.4 457.7 542.8 462.2 544.5 466.3C546.2 470.4 547.3 474.4 547.6 478.5C547.9 482.6 547.3 486.7 546.2 490.8C545.1 494.9 543.3 499.2 541 503C538.7 506.8 535.8 510.6 532.3 513.4C528.8 516.1 525.8 516.7 520 519.5"/>
<path d="M520 519.5C514.2 522.3 505.5 525.8 497.4 530C489.3 534.2 479.4 539.6 471.2 544.9C463 550.1 451.9 558.7 448 561.5" stroke-dasharray="11 3.5"/>
<path d="M645.8 207C648.8 211.6 658 225.4 663.5 234.7C669 244 674.3 252.7 679 263C683.7 273.3 688.2 285.3 691.8 296.5C695.4 307.7 698.2 319.7 700.8 330" stroke-dasharray="11 3.5"/>
<path d="M700.8 330C703.4 340.3 705.4 350.9 707.3 358.2C709.2 365.5 710.8 368.9 712.4 373.7C714 378.5 715.3 382.7 717 387C718.7 391.3 719.2 394.3 722.7 399.4C726.2 404.5 733 411.8 738.1 417.4C743.2 423 748.9 428.4 753.6 432.8C758.3 437.2 762.2 438.9 766.5 443.5C770.8 448.1 776.5 454.6 779.3 460.4C782.1 466.2 783.2 472.4 783.2 478.4C783.2 484.4 781.7 491.4 779.3 496.5C776.9 501.6 773.3 506.1 769 509.3C764.7 512.5 759.2 514.4 753.6 515.7C748 517 743.3 517.3 735.6 517"/>
<path d="M735.6 517C727.9 516.7 716.3 514.8 707.3 514C698.3 513.2 690.1 512.3 681.5 512.4C672.9 512.5 664.4 513.3 655.8 514.5C647.2 515.7 638.7 517.5 630.1 519.6C621.5 521.7 613 524.1 604.4 527.3C595.8 530.5 587.2 534.3 578.6 539C570 543.7 561.5 549.4 552.9 555.6C544.3 561.8 535.8 568.1 527.2 576.2C518.6 584.4 509.2 595.1 501.5 604.5C493.8 613.9 486.9 623.8 480.9 632.8C474.9 641.8 469.7 650.5 465.4 658.5C461.1 666.5 457.2 676.2 455.1 681C453 685.8 452.9 686 452.5 687" stroke-dasharray="11 3.5"/>
<path d="M810 207C813.1 210.3 822.3 220.2 828.4 227C834.5 233.8 839.6 240.7 846.5 247.6C853.4 254.5 861.9 262.2 869.6 268.2" stroke-dasharray="11 3.5"/>
<path d="M869.6 268.2C877.3 274.2 885.9 279.3 892.8 283.6C899.7 287.9 905.7 290 910.8 293.9C915.9 297.8 920.2 301.6 923.6 306.8C927 312 929.9 318.8 931.4 324.8C932.9 330.8 933.5 336.8 932.6 342.8C931.7 348.8 929.4 354.8 926.2 360.8C923 366.8 918.1 372.4 913.4 378.8C908.7 385.2 903.5 393 897.9 399.4C892.3 405.8 886.3 412.7 879.9 417.4C873.5 422.1 866.2 425.3 859.3 427.7C852.4 430.1 845.6 431.5 838.7 431.5C831.9 431.5 825.5 429.7 818.2 427.7C810.9 425.7 801 422.9 795 419.5C789 416.1 785.6 412.1 781.9 407C778.2 401.9 775 394.6 772.9 389C770.8 383.4 769.9 379.6 769 373.6C768.1 367.6 768.3 361.6 767.7 353C767.1 344.4 766.7 332.5 765.2 322.2C763.7 311.9 761.5 301.2 758.7 291.3C755.9 281.4 751.8 271.1 748.4 263C745 254.8 741.3 248.8 738.1 242.4C734.9 236 731.3 230.3 729.1 224.4C726.9 218.5 725.5 209.9 724.8 207"/>
<path d="M780 207C782.5 210 789.9 218.2 795 225C800.1 231.8 804 239.5 810.4 247.6C816.8 255.7 825.5 265.6 833.6 273.3C841.8 281 851.1 288.7 859.3 294" stroke-dasharray="11 3.5"/>
<path d="M859.3 294C867.4 299.3 876 301.9 882.5 305C889 308.1 894.1 310.1 898 312.9C901.9 315.7 903.9 318.3 905.6 322C907.3 325.7 908.6 330.2 908.2 335C907.8 339.8 906 345.3 903 350.5C900 355.7 895.4 359.6 890.2 366C885 372.4 878 382.6 872 389C866 395.4 860 401.3 854 404.5C848 407.7 842 408.4 836 408.4C830 408.4 823.5 406.9 818 404.5C812.5 402.1 806.5 398.5 802.7 394.2C798.9 389.9 796.5 386.5 795 378.8"/>
<path d="M795 378.8C793.5 371.1 794.4 358.3 793.5 348C792.6 337.7 791.5 327.3 789.6 317C787.7 306.7 784.9 296.5 781.9 286.2C778.9 275.9 775.5 264.7 771.6 255.3C767.7 245.9 762.5 237.7 758.7 229.6C754.9 221.5 750.4 210.8 748.7 207" stroke-dasharray="11 3.5"/>
<path d="M854.7 207C857.6 209.9 865.9 218.5 872.2 224.4C878.6 230.3 886.4 236.4 892.8 242.4C899.2 248.4 904.8 254.9 910.8 260.5C916.8 266.1 923.2 272 928.8 275.9" stroke-dasharray="11 3.5"/>
<path d="M928.8 275.9C934.4 279.8 939.9 280.6 944.2 283.6C948.5 286.6 951.5 289.2 954.5 293.9C957.5 298.6 960.5 305.9 962.2 311.9C963.9 317.9 964.8 324 964.8 330C964.8 336 963.9 342.4 962.2 348C960.5 353.6 957.9 358.3 954.5 363.4C951.1 368.5 946.8 373.7 941.6 378.8C936.5 383.9 929.2 389.1 923.6 394.2C918 399.3 912.9 404.1 908.2 409.7C903.5 415.3 898.9 421.8 895.3 427.7C891.6 433.6 888.8 438.7 886.3 445C883.8 451.3 881.5 459.2 880 465.6C878.5 472 878.6 477.6 877.3 483.6C876 489.6 874.8 495.6 872.2 501.6C869.6 507.6 866.2 514 861.9 519.6C857.6 525.2 852.5 530.3 846.5 535C840.5 539.7 832.8 544.8 825.9 548C819 551.2 810.4 553 805.3 554.3C800.1 555.6 800.6 556.4 795 556C789.4 555.6 778.5 553.6 771.6 551.8"/>
<path d="M771.6 551.8C764.7 550 760 547.4 753.6 545.3C747.2 543.2 740.7 540.7 733 539" stroke-dasharray="11 3.5"/>
<path d="M733 539C725.3 537.3 715.9 535.9 707.3 535C698.7 534.1 690.1 533.7 681.5 533.8C672.9 533.9 664.4 534.3 655.8 535.6C647.2 536.9 638.7 539 630.1 541.5C621.5 544 613 546.9 604.4 550.5C595.8 554.1 587.2 558.1 578.6 563.3C570 568.4 561.5 574.1 552.9 581.4C544.3 588.7 534.9 598 527.2 607C519.5 616 512.2 626.4 506.6 635.4C501 644.4 497.4 653.4 493.7 661C490 668.6 487.5 673.4 484.7 681C481.9 688.6 478.9 697.3 477 706.7C475.1 716.1 473.4 726.9 473.2 737.6C473 748.3 474 760.3 475.7 771C477.4 781.7 480.6 792.6 483.4 802C486.2 811.4 490.2 818.6 492.4 827.6C494.5 836.6 496.3 847 496.3 856C496.3 865 495 873.6 492.4 881.7C489.8 889.8 484.7 898.6 480.9 904.8C477.1 911 471.5 916.6 469.6 919"/>
<path d="M990.5 414.8C985 415.8 966.5 417.9 957.8 420.5C949.1 423.1 943.9 426.8 938.2 430.4C932.5 433.9 927.9 437.4 923.5 441.8C919.1 446.2 915 452.1 912 456.5C909 460.9 907.4 463.4 905.5 468C903.6 472.6 902.1 478.2 900.5 484.4C898.9 490.6 896.9 498.7 895.8 505C894.7 511.3 894.5 515.9 894 522.2C893.5 528.5 893.9 535.5 892.8 542.8C891.7 550.1 890.2 558.2 887.6 565.9C885 573.6 881.6 581.7 877.3 589C873 596.3 867.9 603.6 861.9 609.6C855.9 615.6 848.6 620.5 841.3 625C834 629.5 825.9 633.9 818.2 636.7C810.5 639.5 802.8 641.2 795 641.8C787.2 642.4 778.5 641.4 771.6 640.5C764.7 639.6 760 638.6 753.6 636.7C747.2 634.8 740.7 631.3 733 629C725.3 626.7 715.9 624.3 707.3 623C698.7 621.7 690.1 621.1 681.5 621.2C672.9 621.3 664.4 622.1 655.8 623.8C647.2 625.5 638.7 628.1 630.1 631.5C621.5 634.9 612.1 639.5 604.4 644.4C596.7 649.3 590 655 583.8 661.1C577.6 667.2 572.6 674.2 567 681C561.4 687.8 555 693 550.3 701.6C545.6 710.2 541.4 721.8 538.8 732.5C536.2 743.2 534.9 754.8 534.9 765.9C534.9 777 536.4 788.6 538.8 799.3C541.1 810 545.8 820.8 549 830.2C552.2 839.7 556.5 847.4 558 856C559.5 864.6 559.3 873.6 558 881.7C556.7 889.8 553.5 898.6 550.3 904.8C547.1 911 540.9 916.6 539 919"/>
<path d="M1071.6 404.5C1075.7 405.3 1087.7 408.2 1096 409.2C1104.3 410.1 1112.4 410.3 1121.7 410.2C1131 410.1 1142.1 410.1 1151.6 408.5C1161.1 406.9 1169.8 404 1178.6 400.8C1187.4 397.6 1196.2 392 1204.4 389.2C1212.6 386.4 1218.9 385.2 1227.5 384C1236.1 382.8 1246.4 381.8 1255.8 382C1265.2 382.2 1274.2 382.8 1284.1 385.3C1294 387.8 1305.5 392.4 1315 396.9C1324.5 401.4 1333.5 407.6 1340.8 412.3C1348.1 417 1352.6 420.2 1358.8 425.2C1365 430.1 1371.7 435.7 1378.1 442"/>
<path d="M1378.1 442C1384.5 448.3 1389.9 456.1 1397.4 463C1404.9 469.9 1414.5 477 1423.1 483.6C1431.7 490.2 1439.1 496.2 1448.9 502.9C1458.7 509.5 1476.5 520.1 1482 523.5" stroke-dasharray="11 3.5"/>
<path d="M1482 566.5C1476.5 564.3 1458.7 557.9 1448.9 553.1C1439.1 548.3 1433.8 544.1 1423.1 537.7C1412.4 531.3 1395.2 521.4 1384.5 514.5C1373.8 507.6 1367 503.4 1358.8 496.5C1350.6 489.6 1342 479.7 1335.6 473.3" stroke-dasharray="11 3.5"/>
<path d="M1335.6 473.3C1329.2 466.9 1326.6 462.6 1320.2 457.9C1313.8 453.2 1303 448.3 1297 445C1291 441.7 1289.7 440.1 1284.1 438C1278.5 435.9 1271.8 433.7 1263.6 432.4C1255.4 431.1 1245.1 430 1235.2 430.4C1225.3 430.8 1214.1 432.6 1204.4 435C1194.8 437.4 1185 441.6 1177.3 445C1169.6 448.4 1164.2 451 1158 455.3C1151.8 459.6 1144.8 466 1140 470.7C1135.2 475.4 1132.6 479.4 1129.4 483.6C1126.2 487.8 1123.5 491.3 1121 496C1118.5 500.7 1116.5 506.1 1114.5 512C1112.5 517.9 1110.6 526.1 1108.8 531.6C1107 537.1 1106.7 539.7 1103.7 545C1100.7 550.3 1095.2 558.8 1090.9 563.3C1086.6 567.8 1082.3 568.9 1078 572.3C1073.7 575.7 1069 579.4 1065.1 583.9C1061.2 588.4 1057.4 593.4 1054.8 599.4C1052.2 605.4 1050.1 613.1 1049.7 620C1049.3 626.9 1050.2 633.6 1052.3 640.5C1054.4 647.4 1058.3 654.4 1062.6 661.1C1066.9 667.9 1072.4 676.6 1078 681C1083.6 685.4 1089.6 685.9 1096 687.4C1102.4 688.9 1109.3 690.4 1116.6 690C1123.9 689.6 1134 687.1 1140 684.9"/>
<path d="M1140 684.9C1146 682.7 1144.3 681.1 1152.9 676.7C1161.5 672.3 1176.5 664.2 1191.5 658.6C1206.5 653 1225.8 647.7 1243 643.2C1260.2 638.7 1277.2 634.8 1294.4 631.6C1311.6 628.4 1328.7 625.7 1345.9 623.9C1363.1 622.1 1380.2 621.2 1397.4 620.8C1414.6 620.4 1434.8 620.9 1448.9 621.3C1463 621.7 1476.5 622.7 1482 623" stroke-dasharray="11 3.5"/>
<path d="M1156.7 548C1157.3 544.6 1158.2 533.8 1160.6 527.4C1163 521 1166.2 515 1170.9 509.4C1175.6 503.8 1182 498.2 1188.9 493.9C1195.8 489.6 1203.9 485.8 1212.1 483.6C1220.2 481.4 1229.2 480.3 1237.8 480.5C1246.4 480.7 1255.4 482.4 1263.6 484.9C1271.8 487.3 1279.8 490.7 1286.7 495.2C1293.6 499.7 1299.1 506.5 1304.7 511.9C1310.3 517.3 1315.1 522.7 1320.2 527.4C1325.3 532.1 1331.8 535.9 1335.6 540.2C1339.4 544.5 1342.4 548.8 1343.3 553.1C1344.2 557.4 1342.9 562.4 1340.8 566C1338.7 569.6 1336.1 572.9 1330.5 575"/>
<path d="M1330.5 575C1324.9 577.1 1317.6 576.9 1307.3 578.8C1297 580.7 1281.6 583.4 1268.7 586.6C1255.8 589.8 1243 594.1 1230.1 598.2C1217.2 602.3 1202.2 607.4 1191.5 611C1180.8 614.6 1174.3 616.8 1165.7 620C1157.1 623.2 1146 627.5 1140 630.3" stroke-dasharray="11 3.5"/>
<path d="M1140 630.3C1134 633.1 1133.3 635.1 1129.4 636.7C1125.5 638.3 1120.9 640.2 1116.6 640C1112.3 639.8 1106.5 637.9 1103.7 635.4C1100.9 632.9 1099.5 628.8 1099.9 625.1C1100.3 621.5 1102.8 616.7 1106.3 613.5C1109.8 610.3 1115.4 610.9 1121 606C1126.6 601.1 1135.1 590.2 1140 584C1144.9 577.8 1147.8 573.1 1150.3 568.6C1152.8 564.1 1153.9 560.4 1155 557C1156.1 553.6 1156.4 549.5 1156.7 548"/>
<path d="M1482 682.3C1476.5 682.7 1458.7 683.6 1448.9 684.9C1439.1 686.2 1431.7 687.4 1423.1 690C1414.5 692.6 1406 696.2 1397.4 700.3C1388.8 704.4 1379.4 709.6 1371.7 714.5C1364 719.4 1358 724.3 1351.1 729.9C1344.2 735.5 1337.4 741.9 1330.5 747.9C1323.6 753.9 1316.8 760.9 1309.9 766C1303 771.1 1297 775.2 1289.3 778.8C1281.6 782.4 1272.2 785.6 1263.6 787.8C1255 789.9 1245.5 791.3 1237.8 791.7C1230.1 792.1 1223.6 791.4 1217.2 790.4"/>
<path d="M1217.2 790.4C1210.8 789.4 1207.1 787.6 1199.2 786C1191.3 784.4 1179 782.1 1170 781C1161 779.9 1156.1 779.6 1145.1 779.2C1134 778.8 1117 778.2 1103.7 778.8C1090.4 779.4 1078 780.7 1065.1 782.6C1052.2 784.5 1037.2 787.7 1026.5 790.3C1015.8 792.9 1008.5 795.2 1000.8 798" stroke-dasharray="11 3.5"/>
<path d="M1000.8 798C993.1 800.8 986.6 803.3 980.2 807C973.8 810.7 967.3 815.3 962.2 820C957.1 824.7 952.6 829.4 949.4 835.4C946.2 841.4 944.4 849.1 942.9 856C941.4 862.9 940.4 869.7 940.4 876.5C940.4 883.3 941.3 889.9 942.9 897C944.5 904.1 948.8 915.3 950 919"/>
<path d="M1482 706.7C1476.5 707.1 1458.7 707.6 1448.9 709.3C1439.1 711 1431.7 713.1 1423.1 717C1414.5 720.9 1405.1 726.5 1397.4 732.5C1389.7 738.5 1383.2 745.8 1376.8 753.1C1370.4 760.4 1364.8 768.9 1358.8 776.2C1352.8 783.5 1347.2 790.8 1340.8 796.8C1334.4 802.8 1327.9 808 1320.2 812.3C1312.5 816.6 1303 820.1 1294.4 822.6C1285.8 825.1 1277.3 826.4 1268.7 827.2C1260.1 828.1 1251.6 828.2 1243 827.7C1234.4 827.2 1225.8 825.8 1217.2 823.9C1208.6 822 1200.1 818 1191.5 816.1C1182.9 814.2 1174.3 813.1 1165.7 812.3C1157.1 811.5 1148.2 811.1 1140 811.5C1131.8 811.9 1124.8 813.2 1116.6 814.8C1108.4 816.4 1099.1 818.6 1090.9 821.2C1082.8 823.8 1074.1 826.1 1067.7 830.2C1061.3 834.3 1056.2 840.5 1052.3 845.6C1048.4 850.7 1045.8 855.9 1044.5 861C1043.2 866.1 1043.6 871.3 1044.5 876.5C1045.4 881.7 1046.7 887.3 1049.7 892C1052.7 896.7 1056.2 900.3 1062.6 904.8C1069 909.3 1083.8 916.6 1088 919"/>
<path d="M1182 919C1179.3 917.1 1170.1 911.5 1165.7 907.5C1161.3 903.5 1157.8 899.9 1155.4 894.7C1153.1 889.6 1151.6 882.6 1151.6 876.6C1151.6 870.6 1152.6 864 1155.4 858.6C1158.2 853.2 1162.7 847.8 1168.3 844.4C1173.9 841 1182.5 838.9 1188.9 838.5C1195.3 838.1 1200.9 840.4 1206.9 841.9C1212.9 843.4 1218 846.5 1224.9 847.8C1231.8 849.1 1239.9 850 1248.1 849.6C1256.2 849.2 1265.2 847.9 1273.8 845.7C1282.4 843.6 1291.9 838.9 1299.6 836.7C1307.3 834.5 1313.3 832.9 1320.2 832.3C1327.1 831.7 1333.9 831.7 1340.8 832.9C1347.7 834.1 1355 836.3 1361.4 839.3C1367.8 842.3 1374.9 846.4 1379.4 850.9C1383.9 855.4 1386.9 861.1 1388.4 866.3C1389.9 871.4 1389.9 876.2 1388.4 881.8C1386.9 887.4 1382.8 894.9 1379.4 899.8C1376 904.7 1371.6 907.8 1368 911"/>
<path d="M1368 911C1364.4 914.2 1359.7 917.7 1358 919" stroke-dasharray="11 3.5"/>
</g>
<g fill="none" stroke="#e8e800" stroke-width="1.2">
<defs><rect id="st" x="-4.5" y="-2.1" width="9" height="4.2" rx="1.4"/></defs>
<use href="#st" transform="translate(501.6 186.9)rotate(138.4)"/>
<use href="#st" transform="translate(492.4 195.1)rotate(138.4)"/>
<use href="#st" transform="translate(508.2 194.5)rotate(138.8)"/>
<use href="#st" transform="translate(498.9 202.6)rotate(138.8)"/>
<use href="#st" transform="translate(514.8 201.8)rotate(137.5)"/>
<use href="#st" transform="translate(505.7 210.2)rotate(137.5)"/>
<use href="#st" transform="translate(521.4 208.6)rotate(132.8)"/>
<use href="#st" transform="translate(513 217.7)rotate(132.8)"/>
<use href="#st" transform="translate(528.7 214.8)rotate(129)"/>
<use href="#st" transform="translate(520.9 224.4)rotate(129)"/>
<use href="#st" transform="translate(536.7 221.4)rotate(131.7)"/>
<use href="#st" transform="translate(528.4 230.6)rotate(131.7)"/>
<use href="#st" transform="translate(544.2 228.7)rotate(136.1)"/>
<use href="#st" transform="translate(535.2 237.3)rotate(136.1)"/>
<use href="#st" transform="translate(551.1 236.2)rotate(137.9)"/>
<use href="#st" transform="translate(541.9 244.5)rotate(137.9)"/>
<use href="#st" transform="translate(557.8 243.6)rotate(138.2)"/>
<use href="#st" transform="translate(548.5 251.9)rotate(138.2)"/>
<use href="#st" transform="translate(564.5 251.1)rotate(137.6)"/>
<use href="#st" transform="translate(555.2 259.3)rotate(137.6)"/>
<use href="#st" transform="translate(571.1 259.1)rotate(139.6)"/>
<use href="#st" transform="translate(561.4 266.7)rotate(139.6)"/>
<use href="#st" transform="translate(577.2 267.6)rotate(142.1)"/>
<use href="#st" transform="translate(566.9 274.4)rotate(142.1)"/>
<use href="#st" transform="translate(582.7 276.3)rotate(143.6)"/>
<use href="#st" transform="translate(572 282.6)rotate(143.6)"/>
<use href="#st" transform="translate(587.7 285.2)rotate(143.9)"/>
<use href="#st" transform="translate(576.8 291.2)rotate(143.9)"/>
<use href="#st" transform="translate(592.4 294.3)rotate(144)"/>
<use href="#st" transform="translate(581.4 299.8)rotate(144)"/>
<use href="#st" transform="translate(596.9 303.4)rotate(144.8)"/>
<use href="#st" transform="translate(585.7 308.7)rotate(144.8)"/>
<use href="#st" transform="translate(601.1 312.7)rotate(146.6)"/>
<use href="#st" transform="translate(589.7 317.6)rotate(146.6)"/>
<use href="#st" transform="translate(605 322.1)rotate(148.3)"/>
<use href="#st" transform="translate(593.4 326.7)rotate(148.3)"/>
<use href="#st" transform="translate(608.6 331.5)rotate(148.5)"/>
<use href="#st" transform="translate(597.1 336)rotate(148.5)"/>
<use href="#st" transform="translate(612.3 340.7)rotate(148.4)"/>
<use href="#st" transform="translate(600.8 345.3)rotate(148.4)"/>
<use href="#st" transform="translate(616 350.1)rotate(148.6)"/>
<use href="#st" transform="translate(604.4 354.6)rotate(148.6)"/>
<use href="#st" transform="translate(619.6 359.3)rotate(148.3)"/>
<use href="#st" transform="translate(608.1 363.9)rotate(148.3)"/>
<use href="#st" transform="translate(623.3 368.6)rotate(148.5)"/>
<use href="#st" transform="translate(611.8 373.2)rotate(148.5)"/>
<use href="#st" transform="translate(627 377.9)rotate(147.9)"/>
<use href="#st" transform="translate(615.5 382.5)rotate(147.9)"/>
<use href="#st" transform="translate(630.9 386.9)rotate(146)"/>
<use href="#st" transform="translate(619.5 391.9)rotate(146)"/>
<use href="#st" transform="translate(635 395.8)rotate(144.2)"/>
<use href="#st" transform="translate(623.8 401.2)rotate(144.2)"/>
<use href="#st" transform="translate(639.4 404.4)rotate(141.6)"/>
<use href="#st" transform="translate(628.5 410.3)rotate(141.6)"/>
<use href="#st" transform="translate(644.2 412.9)rotate(139)"/>
<use href="#st" transform="translate(633.6 419.3)rotate(139)"/>
<use href="#st" transform="translate(649.4 421.2)rotate(137.9)"/>
<use href="#st" transform="translate(639 427.9)rotate(137.9)"/>
<use href="#st" transform="translate(654.9 429.2)rotate(136.5)"/>
<use href="#st" transform="translate(644.8 436.5)rotate(136.5)"/>
<use href="#st" transform="translate(660.8 436.4)rotate(132.2)"/>
<use href="#st" transform="translate(651.5 444.7)rotate(132.2)"/>
<use href="#st" transform="translate(667.5 443.8)rotate(133.1)"/>
<use href="#st" transform="translate(658.3 452.1)rotate(133.1)"/>
<use href="#st" transform="translate(674 450.3)rotate(127.7)"/>
<use href="#st" transform="translate(665.9 459.7)rotate(127.7)"/>
<use href="#st" transform="translate(681.1 455)rotate(115.2)"/>
<use href="#st" transform="translate(675.5 466)rotate(115.2)"/>
<use href="#st" transform="translate(689.6 458.6)rotate(109.2)"/>
<use href="#st" transform="translate(685.3 470.2)rotate(109.2)"/>
<use href="#st" transform="translate(698.9 461.9)rotate(108.6)"/>
<use href="#st" transform="translate(694.9 473.6)rotate(108.6)"/>
<use href="#st" transform="translate(708.2 464.9)rotate(106.7)"/>
<use href="#st" transform="translate(704.6 476.8)rotate(106.7)"/>
<use href="#st" transform="translate(717.6 467.6)rotate(104.8)"/>
<use href="#st" transform="translate(714.5 479.6)rotate(104.8)"/>
<use href="#st" transform="translate(727 469.8)rotate(101.6)"/>
<use href="#st" transform="translate(724.5 481.9)rotate(101.6)"/>
<use href="#st" transform="translate(736.7 471.6)rotate(100.2)"/>
<use href="#st" transform="translate(734.5 483.8)rotate(100.2)"/>
<use href="#st" transform="translate(746.7 473.5)rotate(102.2)"/>
<use href="#st" transform="translate(744.1 485.7)rotate(102.2)"/>
<use href="#st" transform="translate(756.6 475.8)rotate(103.5)"/>
<use href="#st" transform="translate(753.7 487.9)rotate(103.5)"/>
<use href="#st" transform="translate(766.7 478.5)rotate(107)"/>
<use href="#st" transform="translate(763 490.3)rotate(107)"/>
<use href="#st" transform="translate(776.6 482.1)rotate(112.7)"/>
<use href="#st" transform="translate(771.8 493.5)rotate(112.7)"/>
<use href="#st" transform="translate(786.1 486.4)rotate(116.2)"/>
<use href="#st" transform="translate(780.6 497.5)rotate(116.2)"/>
<use href="#st" transform="translate(795.2 491.4)rotate(120.4)"/>
<use href="#st" transform="translate(789 502.1)rotate(120.4)"/>
<use href="#st" transform="translate(804.6 497.5)rotate(131.5)"/>
<use href="#st" transform="translate(796.4 506.8)rotate(131.5)"/>
<use href="#st" transform="translate(812.1 505.3)rotate(138.8)"/>
<use href="#st" transform="translate(802.8 513.4)rotate(138.8)"/>
<use href="#st" transform="translate(818.7 513.4)rotate(142.9)"/>
<use href="#st" transform="translate(808.8 520.8)rotate(142.9)"/>
<use href="#st" transform="translate(824.7 521.8)rotate(146.3)"/>
<use href="#st" transform="translate(814.4 528.7)rotate(146.3)"/>
<use href="#st" transform="translate(830.2 530.6)rotate(149.6)"/>
<use href="#st" transform="translate(819.5 536.9)rotate(149.6)"/>
<use href="#st" transform="translate(835.2 539.9)rotate(155.1)"/>
<use href="#st" transform="translate(823.9 545.2)rotate(155.1)"/>
<use href="#st" transform="translate(839.2 549.7)rotate(160.5)"/>
<use href="#st" transform="translate(827.5 553.9)rotate(160.5)"/>
<use href="#st" transform="translate(842.3 559.6)rotate(164.2)"/>
<use href="#st" transform="translate(830.4 563)rotate(164.2)"/>
<use href="#st" transform="translate(844.7 569.8)rotate(168.4)"/>
<use href="#st" transform="translate(832.6 572.3)rotate(168.4)"/>
<use href="#st" transform="translate(846.7 579.6)rotate(168)"/>
<use href="#st" transform="translate(834.6 582.2)rotate(168)"/>
<use href="#st" transform="translate(848.9 589.1)rotate(166.4)"/>
<use href="#st" transform="translate(836.9 592.1)rotate(166.4)"/>
<use href="#st" transform="translate(851.3 598.7)rotate(165)"/>
<use href="#st" transform="translate(839.4 601.9)rotate(165)"/>
<use href="#st" transform="translate(854 608.3)rotate(164.5)"/>
<use href="#st" transform="translate(842 611.6)rotate(164.5)"/>
<use href="#st" transform="translate(856.7 617.6)rotate(162)"/>
<use href="#st" transform="translate(844.9 621.4)rotate(162)"/>
<use href="#st" transform="translate(860.1 626)rotate(153.2)"/>
<use href="#st" transform="translate(849 631.6)rotate(153.2)"/>
<use href="#st" transform="translate(864.8 634.1)rotate(147.3)"/>
<use href="#st" transform="translate(854.4 640.8)rotate(147.3)"/>
<use href="#st" transform="translate(870.2 642.8)rotate(149.7)"/>
<use href="#st" transform="translate(859.5 649.1)rotate(149.7)"/>
<use href="#st" transform="translate(917.7 698.6)rotate(127.3)"/>
<use href="#st" transform="translate(910.2 708.5)rotate(127.3)"/>
<use href="#st" transform="translate(925.7 704.5)rotate(126.4)"/>
<use href="#st" transform="translate(918.3 714.5)rotate(126.4)"/>
<use href="#st" transform="translate(933.6 710.2)rotate(124.1)"/>
<use href="#st" transform="translate(926.7 720.4)rotate(124.1)"/>
<use href="#st" transform="translate(941.8 715.6)rotate(122.4)"/>
<use href="#st" transform="translate(935.2 726)rotate(122.4)"/>
<use href="#st" transform="translate(950.1 720.6)rotate(119.8)"/>
<use href="#st" transform="translate(944 731.4)rotate(119.8)"/>
<use href="#st" transform="translate(958.7 725.3)rotate(118.1)"/>
<use href="#st" transform="translate(952.9 736.3)rotate(118.1)"/>
<use href="#st" transform="translate(967.4 729.8)rotate(116.3)"/>
<use href="#st" transform="translate(961.9 740.9)rotate(116.3)"/>
<use href="#st" transform="translate(976.2 733.9)rotate(113.5)"/>
<use href="#st" transform="translate(971.3 745.3)rotate(113.5)"/>
<use href="#st" transform="translate(985.2 737.6)rotate(110.9)"/>
<use href="#st" transform="translate(980.8 749.2)rotate(110.9)"/>
<use href="#st" transform="translate(994.3 740.8)rotate(107.9)"/>
<use href="#st" transform="translate(990.5 752.6)rotate(107.9)"/>
<use href="#st" transform="translate(1003.6 743.5)rotate(104.3)"/>
<use href="#st" transform="translate(1000.5 755.5)rotate(104.3)"/>
<use href="#st" transform="translate(1012.9 745.6)rotate(100.5)"/>
<use href="#st" transform="translate(1010.7 757.8)rotate(100.5)"/>
<use href="#st" transform="translate(1022.5 747.1)rotate(97.4)"/>
<use href="#st" transform="translate(1020.9 759.4)rotate(97.4)"/>
<use href="#st" transform="translate(1032.1 748.1)rotate(94.3)"/>
<use href="#st" transform="translate(1031.2 760.5)rotate(94.3)"/>
<use href="#st" transform="translate(1041.8 748.6)rotate(91.5)"/>
<use href="#st" transform="translate(1041.5 761)rotate(91.5)"/>
<use href="#st" transform="translate(1051.5 748.6)rotate(89.2)"/>
<use href="#st" transform="translate(1051.7 761)rotate(89.2)"/>
<use href="#st" transform="translate(1061.2 748.2)rotate(86.6)"/>
<use href="#st" transform="translate(1062 760.6)rotate(86.6)"/>
<use href="#st" transform="translate(1071 747.5)rotate(84.6)"/>
<use href="#st" transform="translate(1072.2 759.8)rotate(84.6)"/>
<use href="#st" transform="translate(1080.8 746.5)rotate(83.6)"/>
<use href="#st" transform="translate(1082.2 758.8)rotate(83.6)"/>
<use href="#st" transform="translate(1090.6 745.2)rotate(82)"/>
<use href="#st" transform="translate(1092.3 757.5)rotate(82)"/>
<use href="#st" transform="translate(1100.1 743.6)rotate(78.4)"/>
<use href="#st" transform="translate(1102.5 755.8)rotate(78.4)"/>
<use href="#st" transform="translate(1109.3 741.4)rotate(74.2)"/>
<use href="#st" transform="translate(1112.7 753.3)rotate(74.2)"/>
<use href="#st" transform="translate(1118.7 738.5)rotate(72.2)"/>
<use href="#st" transform="translate(1122.5 750.3)rotate(72.2)"/>
<use href="#st" transform="translate(1128.1 735.4)rotate(71.8)"/>
<use href="#st" transform="translate(1132 747.2)rotate(71.8)"/>
<use href="#st" transform="translate(1136.3 732)rotate(61.2)"/>
<use href="#st" transform="translate(1142.2 742.8)rotate(61.2)"/>
<use href="#st" transform="translate(1144.6 727)rotate(58.5)"/>
<use href="#st" transform="translate(1151.1 737.6)rotate(58.5)"/>
<use href="#st" transform="translate(1153.1 721.8)rotate(58.4)"/>
<use href="#st" transform="translate(1159.6 732.4)rotate(58.4)"/>
<use href="#st" transform="translate(1161.8 716.6)rotate(59.9)"/>
<use href="#st" transform="translate(1168.1 727.3)rotate(59.9)"/>
<use href="#st" transform="translate(1170.6 711.6)rotate(60.5)"/>
<use href="#st" transform="translate(1176.7 722.4)rotate(60.5)"/>
<use href="#st" transform="translate(1179.5 706.7)rotate(61.9)"/>
<use href="#st" transform="translate(1185.3 717.6)rotate(61.9)"/>
<use href="#st" transform="translate(1188.6 702)rotate(64.4)"/>
<use href="#st" transform="translate(1194 713.2)rotate(64.4)"/>
<use href="#st" transform="translate(1198 697.8)rotate(67.4)"/>
<use href="#st" transform="translate(1202.8 709.2)rotate(67.4)"/>
<use href="#st" transform="translate(1207.5 694)rotate(68.8)"/>
<use href="#st" transform="translate(1212 705.6)rotate(68.8)"/>
<use href="#st" transform="translate(1216.8 690.4)rotate(69.2)"/>
<use href="#st" transform="translate(1221.2 702)rotate(69.2)"/>
<use href="#st" transform="translate(1226.3 686.9)rotate(70.3)"/>
<use href="#st" transform="translate(1230.5 698.6)rotate(70.3)"/>
<use href="#st" transform="translate(1235.7 683.6)rotate(70.1)"/>
<use href="#st" transform="translate(1240 695.2)rotate(70.1)"/>
<use href="#st" transform="translate(1245 680.1)rotate(68.7)"/>
<use href="#st" transform="translate(1249.5 691.7)rotate(68.7)"/>
<use href="#st" transform="translate(1254.2 676.4)rotate(68.3)"/>
<use href="#st" transform="translate(1258.8 687.9)rotate(68.3)"/>
<use href="#st" transform="translate(1263.7 672.8)rotate(69.8)"/>
<use href="#st" transform="translate(1268 684.4)rotate(69.8)"/>
<use href="#st" transform="translate(1273.3 669.4)rotate(71.3)"/>
<use href="#st" transform="translate(1277.3 681.1)rotate(71.3)"/>
<use href="#st" transform="translate(1282.9 666.2)rotate(72.3)"/>
<use href="#st" transform="translate(1286.6 678.1)rotate(72.3)"/>
<use href="#st" transform="translate(1292.5 663.3)rotate(73.4)"/>
<use href="#st" transform="translate(1296.1 675.1)rotate(73.4)"/>
<use href="#st" transform="translate(1302.3 660.5)rotate(74.4)"/>
<use href="#st" transform="translate(1305.6 672.4)rotate(74.4)"/>
<use href="#st" transform="translate(1312.1 657.8)rotate(75.8)"/>
<use href="#st" transform="translate(1315.1 669.9)rotate(75.8)"/>
<use href="#st" transform="translate(1322 655.5)rotate(77.6)"/>
<use href="#st" transform="translate(1324.7 667.6)rotate(77.6)"/>
<use href="#st" transform="translate(1332 653.5)rotate(79.2)"/>
<use href="#st" transform="translate(1334.3 665.6)rotate(79.2)"/>
<use href="#st" transform="translate(1341.9 651.7)rotate(80.5)"/>
<use href="#st" transform="translate(1344 663.9)rotate(80.5)"/>
<use href="#st" transform="translate(1352 650.1)rotate(82)"/>
<use href="#st" transform="translate(1353.7 662.4)rotate(82)"/>
<use href="#st" transform="translate(1362 648.8)rotate(83.3)"/>
<use href="#st" transform="translate(1363.5 661.2)rotate(83.3)"/>
<use href="#st" transform="translate(1372.1 647.8)rotate(84.5)"/>
<use href="#st" transform="translate(1373.3 660.1)rotate(84.5)"/>
<use href="#st" transform="translate(1382.2 646.9)rotate(86)"/>
<use href="#st" transform="translate(1383.1 659.3)rotate(86)"/>
<use href="#st" transform="translate(1392.3 646.3)rotate(87)"/>
<use href="#st" transform="translate(1393 658.7)rotate(87)"/>
<use href="#st" transform="translate(1402.4 645.9)rotate(87.8)"/>
<use href="#st" transform="translate(1402.9 658.3)rotate(87.8)"/>
<use href="#st" transform="translate(1412.5 645.6)rotate(88.7)"/>
<use href="#st" transform="translate(1412.8 657.9)rotate(88.7)"/>
<use href="#st" transform="translate(1422.6 645.4)rotate(89.7)"/>
<use href="#st" transform="translate(1422.7 657.8)rotate(89.7)"/>
<use href="#st" transform="translate(1432.7 645.5)rotate(90.9)"/>
<use href="#st" transform="translate(1432.5 657.9)rotate(90.9)"/>
<use href="#st" transform="translate(1442.8 645.7)rotate(91.3)"/>
<use href="#st" transform="translate(1442.5 658.1)rotate(91.3)"/>
<use href="#st" transform="translate(1452.8 645.9)rotate(91.3)"/>
<use href="#st" transform="translate(1452.5 658.3)rotate(91.3)"/>
<use href="#st" transform="translate(1462.8 646.1)rotate(91.4)"/>
<use href="#st" transform="translate(1462.5 658.5)rotate(91.4)"/>
<use href="#st" transform="translate(1472.8 646.4)rotate(91.4)"/>
<use href="#st" transform="translate(1472.5 658.8)rotate(91.4)"/>
<use href="#st" transform="translate(1482.8 646.6)rotate(91.4)"/>
<use href="#st" transform="translate(1482.5 659)rotate(91.4)"/>
<path d="M930.6 209.8L935.2 209L940.9 239.1L936 239.9Z M945.5 222.4L950.1 221.3L959.6 273.3L955 274.1Z"/>
<path d="M627.5 648.8L575.3 719L692.3 804.5L744.5 734.3Z"/>
</g>
<path d="M587.6 757.7L653.2 806.3" stroke="#8c8c8c" stroke-width="1" fill="none"/>
<path d="M612.6 748.4L600.5 765.9M655.8 778.8L644.2 796.8" stroke="#8c8c8c" stroke-width="1" fill="none" stroke-dasharray="7 3"/>
<path d="M915.9 876.5L896.6 911.3M918.5 877.8L985.4 913.8" stroke="#8c8c8c" stroke-width="1" fill="none" stroke-dasharray="10 4"/>
<g fill="#9c9c9c">
<circle cx="443" cy="241" r="1.7"/>
<circle cx="591" cy="274" r="1.7"/>
<circle cx="509.2" cy="309.8" r="1.7"/>
<circle cx="704.7" cy="281.8" r="1.7"/>
<circle cx="460.3" cy="366" r="1.7"/>
<circle cx="591" cy="391.7" r="1.7"/>
<circle cx="699" cy="414" r="1.7"/>
<circle cx="856.2" cy="240.9" r="1.7"/>
<circle cx="952.4" cy="301.6" r="1.7"/>
<circle cx="792.5" cy="353" r="1.7"/>
<circle cx="1021.4" cy="354.4" r="1.7"/>
<circle cx="929.6" cy="409.4" r="1.7"/>
<circle cx="822" cy="433.6" r="1.7"/>
<circle cx="1061" cy="208" r="1.7"/>
<circle cx="1345.1" cy="242.7" r="1.7"/>
<circle cx="1462.5" cy="326.6" r="1.7"/>
<circle cx="1309.1" cy="332" r="1.7"/>
<circle cx="1166.5" cy="274.4" r="1.7"/>
<circle cx="1137" cy="352.5" r="1.7"/>
<circle cx="1227.5" cy="384" r="1.7"/>
<circle cx="1375.5" cy="436" r="1.7"/>
<circle cx="571.4" cy="504.7" r="1.7"/>
<circle cx="655" cy="509.8" r="1.7"/>
<circle cx="540.3" cy="575.7" r="1.7"/>
<circle cx="750.5" cy="601.2" r="1.7"/>
<circle cx="661.7" cy="644.6" r="1.7"/>
<circle cx="435" cy="650" r="1.7"/>
<circle cx="847.7" cy="600" r="1.7"/>
<circle cx="976.6" cy="530.4" r="1.7"/>
<circle cx="918" cy="640.5" r="1.7"/>
<circle cx="1052.3" cy="459.1" r="1.7"/>
<circle cx="995.9" cy="612.2" r="1.7"/>
<circle cx="1095.2" cy="587.3" r="1.7"/>
<circle cx="1149.5" cy="488.8" r="1.7"/>
<circle cx="1250.2" cy="547.4" r="1.7"/>
<circle cx="1427.3" cy="535.6" r="1.7"/>
<circle cx="1452.7" cy="614.1" r="1.7"/>
<circle cx="1212.1" cy="635" r="1.7"/>
<circle cx="1302.9" cy="632.9" r="1.7"/>
<circle cx="526.7" cy="725.5" r="1.7"/>
<circle cx="511.7" cy="843.6" r="1.7"/>
<circle cx="760" cy="724" r="1.7"/>
<circle cx="650.4" cy="907.4" r="1.7"/>
<circle cx="752.3" cy="897.6" r="1.7"/>
<circle cx="834.9" cy="704.2" r="1.7"/>
<circle cx="796.3" cy="797.3" r="1.7"/>
<circle cx="1008.5" cy="704.2" r="1.7"/>
<circle cx="1106.3" cy="703.6" r="1.7"/>
<circle cx="901.8" cy="769" r="1.7"/>
<circle cx="1010.1" cy="806" r="1.7"/>
<circle cx="1112.2" cy="841.3" r="1.7"/>
<circle cx="934.7" cy="868.8" r="1.7"/>
<circle cx="1430.9" cy="700.3" r="1.7"/>
<circle cx="1170.4" cy="780.6" r="1.7"/>
<circle cx="1273.8" cy="786.5" r="1.7"/>
<circle cx="1187.6" cy="859.4" r="1.7"/>
<circle cx="1331.8" cy="888.5" r="1.7"/>
<circle cx="1249.4" cy="906.7" r="1.7"/>
<circle cx="1471.3" cy="794.3" r="1.7"/>
<circle cx="1430.5" cy="919" r="1.7"/>
</g>
<g fill="#9a9a9a" font-family="Liberation Sans,sans-serif" font-size="14.6">
<text transform="translate(449.5 247)scale(.61 1)">11.52</text>
<text transform="translate(598 279.5)scale(.61 1)">11.47</text>
<text transform="translate(515.6 315.5)scale(.61 1)">11.41</text>
<text transform="translate(711 287.3)scale(.61 1)">11.73</text>
<text transform="translate(466.7 372)scale(.61 1)">11.34</text>
<text transform="translate(598 397.5)scale(.61 1)">11.38</text>
<text transform="translate(706 421)scale(.61 1)">11.71</text>
<text transform="translate(863.2 247.3)scale(.61 1)">11.95</text>
<text transform="translate(959.6 307.7)scale(.61 1)">11.80</text>
<text transform="translate(798.9 359.2)scale(.61 1)">11.98</text>
<text transform="translate(1027.8 360.5)scale(.61 1)">12.50</text>
<text transform="translate(936.5 415.7)scale(.61 1)">11.55</text>
<text transform="translate(828.4 440.2)scale(.61 1)">12.01</text>
<text transform="translate(1067.7 214)scale(.61 1)">11.97</text>
<text transform="translate(1352.4 248.6)scale(.61 1)">12.84</text>
<text transform="translate(1469.5 332.3)scale(.61 1)">12.50</text>
<text transform="translate(1316.3 338)scale(.61 1)">12.50</text>
<text transform="translate(1173.5 280.3)scale(.61 1)">11.73</text>
<text transform="translate(1143.9 358)scale(.61 1)">11.15</text>
<text transform="translate(1235.2 389.8)scale(.61 1)">12.03</text>
<text transform="translate(1383.2 441.8)scale(.61 1)">11.99</text>
<text transform="translate(577.9 510.4)scale(.61 1)">11.72</text>
<text transform="translate(662.2 515.5)scale(.61 1)">11.77</text>
<text transform="translate(547.2 582.4)scale(.61 1)">11.85</text>
<text transform="translate(757.4 607.4)scale(.61 1)">11.54</text>
<text transform="translate(668.7 651)scale(.61 1)">11.94</text>
<text transform="translate(441.5 655.8)scale(.61 1)">11.77</text>
<text transform="translate(852.9 605.6)scale(.61 1)">11.88</text>
<text transform="translate(983.6 536.8)scale(.61 1)">12.25</text>
<text transform="translate(925.4 646.8)scale(.61 1)">12.25</text>
<text transform="translate(1059.2 465.4)scale(.61 1)">12.42</text>
<text transform="translate(1002.9 618.4)scale(.61 1)">11.11</text>
<text transform="translate(1102.4 593.5)scale(.61 1)">11.81</text>
<text transform="translate(1156.7 495)scale(.61 1)">11.88</text>
<text transform="translate(1257.1 553.4)scale(.61 1)">11.93</text>
<text transform="translate(1434.2 541.8)scale(.61 1)">11.94</text>
<text transform="translate(1460 620)scale(.61 1)">12.07</text>
<text transform="translate(1219 641)scale(.61 1)">11.99</text>
<text transform="translate(1309.9 639)scale(.61 1)">12.10</text>
<text transform="translate(533.6 731.5)scale(.61 1)">11.93</text>
<text transform="translate(519 849.8)scale(.61 1)">11.63</text>
<text transform="translate(767 730.2)scale(.61 1)">11.16</text>
<text transform="translate(657.1 913.6)scale(.61 1)">11.81</text>
<text transform="translate(759.5 903.3)scale(.61 1)">12.09</text>
<text transform="translate(842 710.4)scale(.61 1)">12.10</text>
<text transform="translate(803.5 803)scale(.61 1)">12.04</text>
<text transform="translate(1015.7 710)scale(.61 1)">11.73</text>
<text transform="translate(1113.5 709.6)scale(.61 1)">11.93</text>
<text transform="translate(909 774.7)scale(.61 1)">11.59</text>
<text transform="translate(1017 812)scale(.61 1)">11.84</text>
<text transform="translate(1119.2 847.5)scale(.61 1)">11.95</text>
<text transform="translate(941.6 875)scale(.61 1)">11.63</text>
<text transform="translate(1437.3 706.5)scale(.61 1)">12.06</text>
<text transform="translate(1176.8 786.3)scale(.61 1)">11.98</text>
<text transform="translate(1281 792.8)scale(.61 1)">12.09</text>
<text transform="translate(1194.6 865.6)scale(.61 1)">12.03</text>
<text transform="translate(1338.7 895)scale(.61 1)">12.09</text>
<text transform="translate(1256.6 912.5)scale(.61 1)">12.10</text>
<text transform="translate(1478 800)scale(.61 1)">12.11</text>
<text transform="translate(1437 925)scale(.61 1)">11.99</text>
<text transform="translate(653.5 731)scale(.8 1)" font-family="Liberation Sans,Noto Sans CJK SC,sans-serif" font-size="9">公厕</text>
</g>
<g fill="#00ee00" stroke="#000" stroke-width=".25" font-family="Liberation Sans,sans-serif" font-size="18.2">
<text transform="translate(441 442.7)scale(.64 1)">14.50</text>
<text transform="translate(560.6 435)scale(.64 1)">14.00</text>
<text transform="translate(695.7 396)scale(.64 1)">13.50</text>
<text transform="translate(861.9 388.8)scale(.64 1)">13.50</text>
<text transform="translate(865.7 414.5)scale(.64 1)">13.00</text>
<text transform="translate(896.6 461.5)scale(.64 1)">12.50</text>
<text transform="translate(1121.7 418.5)scale(.64 1)">12.50</text>
<text transform="translate(1096 510.4)scale(.64 1)">13.00</text>
<text transform="translate(1125.6 566.3)scale(.64 1)">13.50</text>
<text transform="translate(1430.9 697.5)scale(.64 1)">13.00</text>
</g>
<g fill="#f55252">
<path d="M1060 473.3L1076 495.2L1070.3 497.7L1077.2 544L1063.8 498L1056.1 500.3Z"/>
<path d="M1017.5 542.2L1044 550.5L1039 556L1049.2 569.3L1035.5 560L1030.4 565.9Z"/>
<path d="M1116.6 499L1134.6 518.3L1128.5 520L1144.5 570L1122.5 522L1116 524.8Z"/>
</g>
<path d="M450 568.5L464 572Q466 572.6 466 574.6L466 622.4Q466 624.4 464 625L450 628.5Z" fill="#5a5a5a"/>
<path d="M460 595L455 599.5L460 604" stroke="#c8c8c8" stroke-width="1" fill="none"/>
</svg>
<!-- OVERLAYS -->
<div class="abs" style="left:170px;top:339px;width:278px;height:34px;background:#0090ff;border-radius:3px"></div>
<svg style="left:164px;top:349px" width="7" height="14" viewBox="0 0 7 14"><path d="M7 0 L.5 7 L7 14 Z" fill="#0090ff"/></svg>
<div class="t" style="left:177px;top:350px;font-size:12px;color:#fff">拖动这里自由调节导航栏宽度~</div>
<div class="t" style="left:380px;top:350px;font-size:12px;color:#8ecbfb">不再提示</div>
<svg id="bigarrow" style="left:0;top:0" width="300" height="560" viewBox="0 0 300 560"><path d="M91.8 380.6L118.8 388L113.5 393.7L262.8 511.5L109.1 399.4L106.2 404.7Z" fill="#f55252"/></svg>

</body>
</html>
